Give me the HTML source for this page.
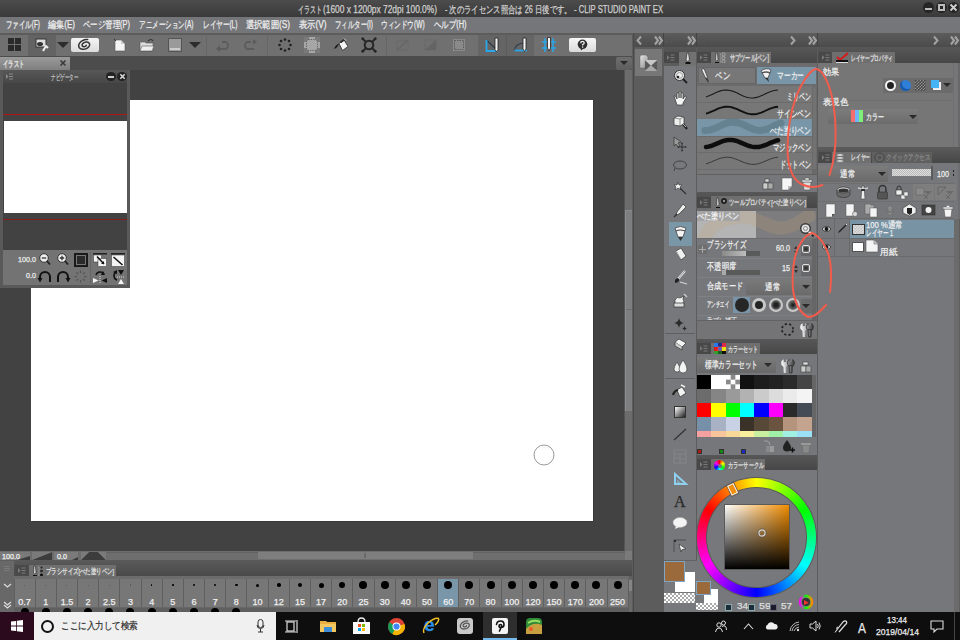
<!DOCTYPE html>
<html><head><meta charset="utf-8">
<style>
*{margin:0;padding:0;box-sizing:border-box}
html,body{width:960px;height:640px;overflow:hidden;background:#424242;font-family:"Liberation Sans",sans-serif;color:#e6e6e6}
.a{position:absolute}
.t{position:absolute;white-space:nowrap;line-height:1;-webkit-text-stroke:.25px currentColor}
svg{position:absolute;overflow:visible}
.mn{position:absolute;-webkit-text-stroke:.25px currentColor;top:20px;font-size:10px;color:#eeeeee;white-space:nowrap;line-height:1}
.sep{position:absolute;top:34px;width:1px;height:21px;background:#666}
.hdr{position:absolute;background:linear-gradient(#575757,#474747)}
.mbox{position:absolute;background:#484848}
.tab{position:absolute;background:#6f6f6f}
.tt{position:absolute;-webkit-text-stroke:.25px currentColor;font-size:8px;color:#e2e2e2;white-space:nowrap;line-height:1}
</style></head><body>
<!-- ================= title bar ================= -->
<div class="a" style="left:0;top:0;width:960px;height:17px;background:linear-gradient(#4c4c4c,#3a3a3a)"></div>
<div class="t f" style="left:298px;top:4.5px;width:24px;font-size:10px;color:#d0d0d0">イラスト</div>
<div class="t f" style="left:323px;top:4.5px;width:114px;font-size:10px;color:#d0d0d0">(1600 x 1200px 72dpi 100.0%)</div>
<div class="t f" style="left:444.5px;top:4.5px;width:126.5px;font-size:10px;color:#d0d0d0">- 次のライセンス照合は 26 日後です。</div>
<div class="t f" style="left:574px;top:4.5px;width:89px;font-size:10px;color:#d0d0d0">- CLIP STUDIO PAINT EX</div>
<div class="a" style="left:923px;top:2px;width:11px;height:11px;border-radius:50%;background:#262626"></div>
<div class="a" style="left:925px;top:8px;width:7px;height:2px;background:#bbb"></div>
<div class="a" style="left:936px;top:2px;width:11px;height:11px;border-radius:50%;background:#262626"></div>
<div class="a" style="left:938px;top:4px;width:7px;height:7px;border:2px solid #bbb"></div>
<div class="a" style="left:948px;top:2px;width:11px;height:11px;border-radius:50%;background:#262626"></div>
<svg style="left:950px;top:4px" width="7" height="7"><path d="M0.5 0.5 L6.5 6.5 M6.5 0.5 L0.5 6.5" stroke="#d0d0d0" stroke-width="1.8"/></svg>
<!-- ================= menu bar ================= -->
<div class="a" style="left:0;top:17px;width:960px;height:16px;background:#75767a"></div>
<div class="mn f" style="left:5.5px;width:34px">ファイル(F)</div>
<div class="mn f" style="left:48.3px;width:27px">編集(E)</div>
<div class="mn f" style="left:83.3px;width:47px">ページ管理(P)</div>
<div class="mn f" style="left:139.3px;width:54.5px">アニメーション(A)</div>
<div class="mn f" style="left:202.5px;width:34.5px">レイヤー(L)</div>
<div class="mn f" style="left:245.5px;width:44px">選択範囲(S)</div>
<div class="mn f" style="left:298.8px;width:27.5px">表示(V)</div>
<div class="mn f" style="left:334.5px;width:38px">フィルター(I)</div>
<div class="mn f" style="left:381.3px;width:43.7px">ウィンドウ(W)</div>
<div class="mn f" style="left:433.8px;width:32.5px">ヘルプ(H)</div>
<!-- ================= toolbar ================= -->
<div class="a" style="left:0;top:33px;width:632px;height:23px;background:#707070;border-top:2px solid #5c5c5c"></div>
<div class="a" style="left:28px;top:35px;width:28px;height:21px;background:#636363"></div>
<div class="a" style="left:478px;top:35px;width:56px;height:21px;background:#656565"></div>
<div class="a" style="left:506px;top:34px;width:1px;height:22px;background:#5c5c5c"></div>
<div class="sep" style="left:206px"></div>
<div class="sep" style="left:267px"></div>
<div class="sep" style="left:386px"></div>
<!-- grid icon -->
<div class="a" style="left:8px;top:38px;width:6px;height:6px;background:#2a2a2a"></div>
<div class="a" style="left:15px;top:38px;width:6px;height:6px;background:#2a2a2a"></div>
<div class="a" style="left:8px;top:45px;width:6px;height:6px;background:#2a2a2a"></div>
<div class="a" style="left:15px;top:45px;width:6px;height:6px;background:#2a2a2a"></div>
<!-- icon2 -->
<svg style="left:35px;top:38px" width="14" height="14"><rect x="1" y="1" width="10" height="8" fill="#ddd" stroke="#333"/><ellipse cx="5" cy="6" rx="3" ry="2" fill="#333"/><path d="M8 13 L11 8 L13 10" stroke="#eee" stroke-width="2" fill="none"/></svg>
<div class="a" style="left:57px;top:42px;width:0;height:0;border-left:6px solid transparent;border-right:6px solid transparent;border-top:6px solid #2c2c2c"></div>
<!-- white spiral button -->
<div class="a" style="left:71px;top:38px;width:28px;height:14px;border-radius:2px;background:linear-gradient(#f4f4f4,#dcdcdc)"></div>
<svg style="left:78px;top:39px" width="14" height="12"><path d="M8.24 6.15 L8.23 6.30 L8.18 6.46 L8.10 6.63 L7.98 6.80 L7.83 6.97 L7.64 7.12 L7.42 7.27 L7.18 7.40 L6.91 7.51 L6.62 7.59 L6.32 7.64 L6.01 7.66 L5.70 7.65 L5.40 7.60 L5.11 7.51 L4.85 7.38 L4.62 7.22 L4.42 7.02 L4.26 6.79 L4.16 6.53 L4.10 6.24 L4.11 5.94 L4.17 5.61 L4.30 5.29 L4.49 4.95 L4.73 4.63 L5.04 4.32 L5.40 4.02 L5.81 3.76 L6.26 3.53 L6.74 3.34 L7.25 3.19 L7.77 3.09 L8.30 3.05 L8.83 3.07 L9.34 3.14 L9.82 3.28 L10.26 3.47 L10.66 3.72 L11.00 4.03 L11.27 4.38 L11.46 4.78 L11.57 5.22 L11.60 5.68 L11.54 6.17 L11.38 6.67 L11.14 7.18 L10.80 7.67 L10.38 8.15 L9.89 8.60 L9.32 9.02 L8.68 9.38 L8.00 9.70 L7.28 9.94 L6.53 10.12 L5.77 10.22 L5.01 10.25 L4.28 10.19 L3.57 10.05 L2.91 9.82 L2.32 9.52 L1.80 9.14 L1.37 8.69 L1.03 8.17 L0.81 7.60 L0.70 6.99 L0.71 6.34 L0.84 5.67 L1.09 4.99 L1.46 4.31 L1.95 3.65 L2.55 3.02 L3.25 2.44 L4.03 1.91 L4.89 1.45 L5.81 1.06 L6.77 0.76 L7.76 0.56 L8.75 0.46 L9.73 0.46" stroke="#333" stroke-width="1.5" fill="none" stroke-linecap="round"/></svg>
<!-- new doc -->
<svg style="left:113px;top:38px" width="14" height="14"><path d="M2 2 H8 L12 6 V13 H2 Z" fill="#f4f4f4" stroke="#555" stroke-width=".6"/><path d="M8 2 V6 H12" fill="#ccc"/><path d="M1 1 L3 3" stroke="#333"/></svg>
<!-- open folder -->
<svg style="left:139px;top:38px" width="16" height="14"><path d="M1 4 H6 L7 5 H14 V13 H1 Z" fill="#ddd" stroke="#555" stroke-width=".6"/><path d="M3 8 H15 L13 13 H1 Z" fill="#eee" stroke="#555" stroke-width=".6"/><path d="M9 3 Q12 0 14 3" stroke="#333" stroke-width="1.2" fill="none"/></svg>
<!-- save -->
<div class="a" style="left:168px;top:38px;width:14px;height:14px;background:#9a9a9a;border:1px solid #555"></div>
<div class="a" style="left:170px;top:48px;width:10px;height:2px;background:#ccc"></div>
<div class="a" style="left:189px;top:42px;width:0;height:0;border-left:6px solid transparent;border-right:6px solid transparent;border-top:6px solid #2c2c2c"></div>
<!-- undo/redo disabled -->
<svg style="left:215px;top:39px" width="16" height="13"><path d="M7 3 H11 A4 4 0 0 1 11 10 H3" stroke="#5c5c5c" stroke-width="1.8" fill="none"/><path d="M1 10 L5 6 V13 Z" fill="#5c5c5c"/></svg>
<svg style="left:242px;top:39px" width="16" height="13"><path d="M9 3 H5 A4 4 0 0 0 5 10 H12" stroke="#5c5c5c" stroke-width="1.8" fill="none"/><path d="M15 3 L11 0 V6 Z" fill="#5c5c5c"/></svg>
<!-- dots circle -->
<svg style="left:278px;top:38px" width="14" height="14"><g fill="#222"><circle cx="7" cy="1.5" r="1.3"/><circle cx="11" cy="3" r="1.3"/><circle cx="12.5" cy="7" r="1.3"/><circle cx="11" cy="11" r="1.3"/><circle cx="7" cy="12.5" r="1.3"/><circle cx="3" cy="11" r="1.3"/><circle cx="1.5" cy="7" r="1.3"/><circle cx="3" cy="3" r="1.3"/></g></svg>
<!-- faint square -->
<div class="a" style="left:304px;top:37px;width:16px;height:16px;background:#7a7a7a"></div>
<svg style="left:304px;top:37px" width="16" height="16"><path d="M5 0 H11 V5 H16 V11 H11 V16 H5 V11 H0 V5 H5 Z" fill="#a6a6a6"/><path d="M4.5 2.5 H11.5 L13.5 4.5 V11.5 L11.5 13.5 H4.5 L2.5 11.5 V4.5 Z" fill="#a6a6a6" stroke="#555" stroke-width=".9" stroke-dasharray="1.2 1.2"/></svg>
<!-- bucket -->
<svg style="left:333px;top:38px" width="16" height="14"><path d="M6 5.5 L11 2 L15 8.5 L9.5 12.5 Z" fill="#f4f4f4" stroke="#2a2a2a" stroke-width=".8"/><path d="M7.5 4.5 L11.5 1.5" stroke="#2a2a2a" stroke-width="1.6"/><path d="M6 5.5 Q2 7 1 11 Q3 11 5 8 Z" fill="#1e1e1e"/><path d="M11 0.5 L13 2.5" stroke="#ddd" stroke-width="1"/></svg>
<!-- transform -->
<svg style="left:361px;top:37px" width="16" height="16"><circle cx="8" cy="8" r="4.3" fill="none" stroke="#262626" stroke-width="2"/><g stroke="#262626" stroke-width="1.8" stroke-linecap="round"><path d="M1.5 1.5 L5 5"/><path d="M14.5 1.5 L11 5"/><path d="M1.5 14.5 L5 11"/><path d="M14.5 14.5 L11 11"/></g><g fill="#262626"><circle cx="1.8" cy="1.8" r="1.4"/><circle cx="14.2" cy="1.8" r="1.4"/><circle cx="1.8" cy="14.2" r="1.4"/><circle cx="14.2" cy="14.2" r="1.4"/></g></svg>
<!-- disabled icons -->
<svg style="left:396px;top:39px" width="13" height="12"><rect x="1" y="2" width="11" height="9" fill="none" stroke="#646464" stroke-dasharray="1.5 1"/><path d="M1 11 L12 1" stroke="#646464" stroke-width="1.2"/></svg>
<svg style="left:424px;top:39px" width="13" height="12"><rect x="1" y="1" width="11" height="10" fill="none" stroke="#646464" stroke-dasharray="1.5 1"/><path d="M12 1 L1 11 H12 Z" fill="#646464"/></svg>
<svg style="left:452px;top:38px" width="14" height="14"><rect x="1" y="1" width="12" height="12" fill="#8a8a8a"/><rect x="2.5" y="2.5" width="9" height="9" fill="none" stroke="#5a5a5a" stroke-dasharray="1.5 1"/></svg>
<!-- ruler pens -->
<svg style="left:485px;top:37px" width="16" height="16"><path d="M1.5 3 L13 14" stroke="#2a3a48" stroke-width="1.2"/><path d="M1.5 3 V14 H13" stroke="#2aa6ea" stroke-width="1.8" fill="none"/><path d="M10 1 H13 V12.5 L11.5 15 L10 12.5 Z" fill="#f2f2f2" stroke="#222" stroke-width=".8"/></svg>
<svg style="left:513px;top:37px" width="16" height="16"><path d="M1.5 13.5 Q2 7 10 6" stroke="#2a3a48" stroke-width="1.2" fill="none"/><path d="M1.5 13.5 H14" stroke="#2aa6ea" stroke-width="1.8"/><path d="M10 1 H13 V12 L11.5 14.5 L10 12 Z" fill="#f2f2f2" stroke="#222" stroke-width=".8"/></svg>
<svg style="left:541px;top:37px" width="16" height="16"><g stroke="#2aa6ea" stroke-width="1.5"><path d="M1 5 H15"/><path d="M1 11 H15"/><path d="M4 1 V15"/><path d="M12 1 V15"/></g><path d="M6.5 0.5 H9.5 V11 L8 14 L6.5 11 Z" fill="#f2f2f2" stroke="#222" stroke-width=".8"/></svg>
<!-- help -->
<div class="a" style="left:569px;top:38px;width:27px;height:14px;border-radius:2px;background:linear-gradient(#f6f6f6,#dadada)"></div>
<svg style="left:576px;top:39px" width="13" height="12"><circle cx="6.5" cy="5.3" r="4.8" fill="#2e2e2e"/><path d="M4.5 8.5 L5 11.5 L7.5 9.5 Z" fill="#2e2e2e"/><path d="M4.8 4.2 Q4.8 2.3 6.5 2.3 Q8.2 2.3 8.2 3.9 Q8.2 5 6.6 5.6 V6.5" stroke="#f0f0f0" stroke-width="1.3" fill="none"/><circle cx="6.6" cy="8" r=".8" fill="#f0f0f0"/></svg>
<!-- ================= tab row ================= -->
<div class="a" style="left:0;top:56px;width:632px;height:14px;background:#4c4c4c"></div>
<div class="a" style="left:0;top:57px;width:70px;height:13px;background:linear-gradient(#9a9a9a,#7f7f7f)"></div>
<div class="t f" style="left:3px;top:60px;width:21px;font-size:9px;color:#f0f0f0">イラスト</div>
<svg style="left:60px;top:60px" width="6" height="6"><path d="M0.5 0.5 L5.5 5.5 M5.5 0.5 L0.5 5.5" stroke="#3a3a3a" stroke-width="1.6"/></svg>
<div class="a" style="left:616px;top:57px;width:16px;height:13px;background:linear-gradient(#6e6e6e,#5e5e5e);border-radius:2px"></div>
<div class="a" style="left:620px;top:61px;width:0;height:0;border-left:4px solid transparent;border-right:4px solid transparent;border-top:4px solid #2a2a2a"></div>
<!-- ================= canvas ================= -->
<div class="a" style="left:0;top:70px;width:624px;height:482px;background:#424242"></div>
<div class="a" style="left:31px;top:100px;width:562px;height:421px;background:#fff;box-shadow:1px 1px 0 #383838"></div>
<svg style="left:533px;top:444px" width="22" height="22"><circle cx="11" cy="11" r="10" fill="none" stroke="#9a9a9a" stroke-width="1"/></svg>
<div class="a" style="left:624px;top:70px;width:9px;height:482px;background:#6c6c6c;border-left:1px solid #555"></div>
<div class="a" style="left:625px;top:210px;width:8px;height:201px;background:#7e7f81;border-left:1px solid #8e8e8e;border-top:1px solid #8a8a8a"></div>
<div class="a" style="left:626px;top:309px;width:6px;height:1px;background:#6e6e6e"></div>
<!-- ================= status bar ================= -->
<div class="a" style="left:0;top:551px;width:632px;height:10px;background:#6c6c6c"></div>
<div class="a" style="left:0;top:552px;width:30px;height:8px;background:#7a7a7a"></div>
<svg style="left:0;top:552px" width="110" height="8"><path d="M17 8 L30 4 V8 Z" fill="#3c3c3c"/><path d="M32 8 L52 0 V8 Z" fill="#3c3c3c"/><path d="M32 0 H52 L32 8 Z" fill="#7a7a7a"/><rect x="54" y="0" width="24" height="8" fill="#7a7a7a"/><path d="M72 8 L78 5 V8 Z" fill="#3c3c3c"/><path d="M81 8 L89 0 H98 L106 8 Z" fill="#3c3c3c"/><path d="M81 0 H89 L81 8 Z M98 0 H106 V8 Z" fill="#7a7a7a"/></svg>
<div class="tt f" style="left:2px;top:553px;width:18px;font-size:8px;color:#f4f4f4">100.0</div>
<div class="tt f" style="left:57px;top:553px;width:10px;font-size:8px;color:#f4f4f4">0.0</div>
<div class="a" style="left:107px;top:552px;width:518px;height:8px;background:#6e6e6e;border-top:1px solid #626262"></div>
<div class="a" style="left:258px;top:552px;width:215px;height:7px;background:#7e7e7e"></div>
<div class="a" style="left:364px;top:553px;width:2px;height:5px;background:#6a6a6a"></div>
<div class="a" style="left:625px;top:551px;width:7px;height:9px;background:#7a7a7a"></div>
<!-- ================= brush size panel ================= -->
<div class="a" style="left:0;top:560px;width:632px;height:52px;background:#5e5e5e"></div>
<div class="a" style="left:0;top:561px;width:14px;height:51px;background:#686868"></div>
<div class="a" style="left:4px;top:566px;width:6px;height:1px;background:#7a7a7a"></div>
<div class="a" style="left:4px;top:568px;width:6px;height:1px;background:#7a7a7a"></div>
<div class="a" style="left:4px;top:570px;width:6px;height:1px;background:#7a7a7a"></div>
<svg style="left:3px;top:583px" width="9" height="5"><path d="M1 1 L4.5 4 L8 1" stroke="#ddd" stroke-width="1.2" fill="none"/></svg>
<svg style="left:3px;top:601px" width="9" height="8"><path d="M1 1 L4.5 4 L8 1 M1 4 L4.5 7 L8 4" stroke="#ddd" stroke-width="1.2" fill="none"/></svg>
<div class="hdr" style="left:14px;top:560px;width:618px;height:16px;background:linear-gradient(#5a5a5a,#4a4a4a)"></div>
<div class="mbox" style="left:15px;top:565px;width:14px;height:11px;background:#4a4a4a"></div>
<svg style="left:18.0px;top:567.0px" width="8" height="7"><path d="M0 1 L2.5 3.5 L0 6 Z" fill="#7a7a7a"/><path d="M3.5 1 H7.5 M3.5 3.5 H7.5 M3.5 6 H7.5" stroke="#7a7a7a" stroke-width="1"/></svg>
<div class="tab" style="left:29px;top:565px;width:87px;height:11px"></div>
<svg style="left:32px;top:565px" width="12" height="12"><path d="M2 1 L3.5 1 L4 8 L2.8 9 L1.6 8 Z" fill="#ddd" stroke="#222" stroke-width=".6"/><rect x="1" y="10" width="4" height="2" fill="#111"/><path d="M6 2 H7 V11 H6" stroke="#aaa" stroke-width=".6" fill="none"/><circle cx="9.5" cy="2.5" r="1" fill="#222"/><circle cx="9.5" cy="6" r="1.3" fill="#222"/><circle cx="9.5" cy="10" r="1.6" fill="#111"/></svg>
<div class="tt f" style="left:46px;top:568px;width:68px;font-size:8px">ブラシサイズ[べた塗りペン]</div>
<div class="a" style="left:14px;top:576px;width:615px;height:3px;background:#6c6c6c"></div>
<div class="a" style="left:14px;top:579px;width:615px;height:33px;background:#5f5f5f"></div>
<div class="a" style="left:14.50px;top:579px;width:20.18px;height:28px;background:#777"></div>
<div class="a" style="left:24.09px;top:584.50px;width:1px;height:1px;border-radius:50%;background:#555"></div>
<div class="tt" style="left:24.59px;top:598px;font-size:9px;color:#f0f0f0;transform:translateX(-50%)">0.7</div>
<div class="a" style="left:20.59px;top:608px;width:8px;height:8px;border-radius:50%;background:#000"></div>
<div class="a" style="left:35.68px;top:579px;width:20.18px;height:28px;background:#777"></div>
<div class="a" style="left:45.27px;top:584.50px;width:1px;height:1px;border-radius:50%;background:#555"></div>
<div class="tt" style="left:45.77px;top:598px;font-size:9px;color:#f0f0f0;transform:translateX(-50%)">1</div>
<div class="a" style="left:41.77px;top:608px;width:8px;height:8px;border-radius:50%;background:#000"></div>
<div class="a" style="left:56.86px;top:579px;width:20.18px;height:28px;background:#777"></div>
<div class="a" style="left:66.45px;top:584.50px;width:1px;height:1px;border-radius:50%;background:#555"></div>
<div class="tt" style="left:66.95px;top:598px;font-size:9px;color:#f0f0f0;transform:translateX(-50%)">1.5</div>
<div class="a" style="left:62.95px;top:608px;width:8px;height:8px;border-radius:50%;background:#000"></div>
<div class="a" style="left:78.04px;top:579px;width:20.18px;height:28px;background:#777"></div>
<div class="a" style="left:87.63px;top:584.50px;width:1px;height:1px;border-radius:50%;background:#555"></div>
<div class="tt" style="left:88.13px;top:598px;font-size:9px;color:#f0f0f0;transform:translateX(-50%)">2</div>
<div class="a" style="left:84.13px;top:608px;width:8px;height:8px;border-radius:50%;background:#000"></div>
<div class="a" style="left:99.22px;top:579px;width:20.18px;height:28px;background:#777"></div>
<div class="a" style="left:108.81px;top:584.50px;width:1px;height:1px;border-radius:50%;background:#555"></div>
<div class="tt" style="left:109.31px;top:598px;font-size:9px;color:#f0f0f0;transform:translateX(-50%)">2.5</div>
<div class="a" style="left:105.31px;top:608px;width:8px;height:8px;border-radius:50%;background:#000"></div>
<div class="a" style="left:120.40px;top:579px;width:20.18px;height:28px;background:#777"></div>
<div class="a" style="left:129.89px;top:584.40px;width:1.2px;height:1.2px;border-radius:50%;background:#555"></div>
<div class="tt" style="left:130.49px;top:598px;font-size:9px;color:#f0f0f0;transform:translateX(-50%)">3</div>
<div class="a" style="left:126.49px;top:608px;width:8px;height:8px;border-radius:50%;background:#000"></div>
<div class="a" style="left:141.58px;top:579px;width:20.18px;height:28px;background:#777"></div>
<div class="a" style="left:150.92px;top:584.25px;width:1.5px;height:1.5px;border-radius:50%;background:#000"></div>
<div class="tt" style="left:151.67px;top:598px;font-size:9px;color:#f0f0f0;transform:translateX(-50%)">4</div>
<div class="a" style="left:147.67px;top:608px;width:8px;height:8px;border-radius:50%;background:#000"></div>
<div class="a" style="left:162.76px;top:579px;width:20.18px;height:28px;background:#777"></div>
<div class="a" style="left:172.05px;top:584.20px;width:1.6px;height:1.6px;border-radius:50%;background:#000"></div>
<div class="tt" style="left:172.85px;top:598px;font-size:9px;color:#f0f0f0;transform:translateX(-50%)">5</div>
<div class="a" style="left:168.85px;top:608px;width:8px;height:8px;border-radius:50%;background:#000"></div>
<div class="a" style="left:183.94px;top:579px;width:20.18px;height:28px;background:#777"></div>
<div class="a" style="left:193.03px;top:584.00px;width:2px;height:2px;border-radius:50%;background:#000"></div>
<div class="tt" style="left:194.03px;top:598px;font-size:9px;color:#f0f0f0;transform:translateX(-50%)">6</div>
<div class="a" style="left:190.03px;top:608px;width:8px;height:8px;border-radius:50%;background:#000"></div>
<div class="a" style="left:205.12px;top:579px;width:20.18px;height:28px;background:#777"></div>
<div class="a" style="left:214.11px;top:583.90px;width:2.2px;height:2.2px;border-radius:50%;background:#000"></div>
<div class="tt" style="left:215.21px;top:598px;font-size:9px;color:#f0f0f0;transform:translateX(-50%)">7</div>
<div class="a" style="left:211.21px;top:608px;width:8px;height:8px;border-radius:50%;background:#000"></div>
<div class="a" style="left:226.30px;top:579px;width:20.18px;height:28px;background:#777"></div>
<div class="a" style="left:235.14px;top:583.75px;width:2.5px;height:2.5px;border-radius:50%;background:#000"></div>
<div class="tt" style="left:236.39px;top:598px;font-size:9px;color:#f0f0f0;transform:translateX(-50%)">8</div>
<div class="a" style="left:232.39px;top:608px;width:8px;height:8px;border-radius:50%;background:#000"></div>
<div class="a" style="left:247.48px;top:579px;width:20.18px;height:28px;background:#777"></div>
<div class="a" style="left:256.07px;top:583.50px;width:3px;height:3px;border-radius:50%;background:#000"></div>
<div class="tt" style="left:257.57px;top:598px;font-size:9px;color:#f0f0f0;transform:translateX(-50%)">10</div>
<div class="a" style="left:268.66px;top:579px;width:20.18px;height:28px;background:#777"></div>
<div class="a" style="left:277.00px;top:583.25px;width:3.5px;height:3.5px;border-radius:50%;background:#000"></div>
<div class="tt" style="left:278.75px;top:598px;font-size:9px;color:#f0f0f0;transform:translateX(-50%)">12</div>
<div class="a" style="left:289.84px;top:579px;width:20.18px;height:28px;background:#777"></div>
<div class="a" style="left:297.68px;top:582.75px;width:4.5px;height:4.5px;border-radius:50%;background:#000"></div>
<div class="tt" style="left:299.93px;top:598px;font-size:9px;color:#f0f0f0;transform:translateX(-50%)">15</div>
<div class="a" style="left:311.02px;top:579px;width:20.18px;height:28px;background:#777"></div>
<div class="a" style="left:318.61px;top:582.50px;width:5px;height:5px;border-radius:50%;background:#000"></div>
<div class="tt" style="left:321.11px;top:598px;font-size:9px;color:#f0f0f0;transform:translateX(-50%)">17</div>
<div class="a" style="left:332.20px;top:579px;width:20.18px;height:28px;background:#777"></div>
<div class="a" style="left:339.29px;top:582.00px;width:6px;height:6px;border-radius:50%;background:#000"></div>
<div class="tt" style="left:342.29px;top:598px;font-size:9px;color:#f0f0f0;transform:translateX(-50%)">20</div>
<div class="a" style="left:353.38px;top:579px;width:20.18px;height:28px;background:#777"></div>
<div class="a" style="left:359.47px;top:581.00px;width:8px;height:8px;border-radius:50%;background:#000"></div>
<div class="tt" style="left:363.47px;top:598px;font-size:9px;color:#f0f0f0;transform:translateX(-50%)">25</div>
<div class="a" style="left:374.56px;top:579px;width:20.18px;height:28px;background:#777"></div>
<div class="a" style="left:380.65px;top:581.00px;width:8px;height:8px;border-radius:50%;background:#000"></div>
<div class="tt" style="left:384.65px;top:598px;font-size:9px;color:#f0f0f0;transform:translateX(-50%)">30</div>
<div class="a" style="left:395.74px;top:579px;width:20.18px;height:28px;background:#777"></div>
<div class="a" style="left:401.83px;top:581.00px;width:8px;height:8px;border-radius:50%;background:#000"></div>
<div class="tt" style="left:405.83px;top:598px;font-size:9px;color:#f0f0f0;transform:translateX(-50%)">40</div>
<div class="a" style="left:416.92px;top:579px;width:20.18px;height:28px;background:#777"></div>
<div class="a" style="left:423.01px;top:581.00px;width:8px;height:8px;border-radius:50%;background:#000"></div>
<div class="tt" style="left:427.01px;top:598px;font-size:9px;color:#f0f0f0;transform:translateX(-50%)">50</div>
<div class="a" style="left:438.10px;top:579px;width:20.18px;height:28px;background:#7a97a9"></div>
<div class="a" style="left:444.19px;top:581.00px;width:8px;height:8px;border-radius:50%;background:#000"></div>
<div class="tt" style="left:448.19px;top:598px;font-size:9px;color:#f0f0f0;transform:translateX(-50%)">60</div>
<div class="a" style="left:459.28px;top:579px;width:20.18px;height:28px;background:#777"></div>
<div class="a" style="left:465.37px;top:581.00px;width:8px;height:8px;border-radius:50%;background:#000"></div>
<div class="tt" style="left:469.37px;top:598px;font-size:9px;color:#f0f0f0;transform:translateX(-50%)">70</div>
<div class="a" style="left:480.46px;top:579px;width:20.18px;height:28px;background:#777"></div>
<div class="a" style="left:486.55px;top:581.00px;width:8px;height:8px;border-radius:50%;background:#000"></div>
<div class="tt" style="left:490.55px;top:598px;font-size:9px;color:#f0f0f0;transform:translateX(-50%)">80</div>
<div class="a" style="left:501.64px;top:579px;width:20.18px;height:28px;background:#777"></div>
<div class="a" style="left:507.73px;top:581.00px;width:8px;height:8px;border-radius:50%;background:#000"></div>
<div class="tt" style="left:511.73px;top:598px;font-size:9px;color:#f0f0f0;transform:translateX(-50%)">100</div>
<div class="a" style="left:522.82px;top:579px;width:20.18px;height:28px;background:#777"></div>
<div class="a" style="left:528.91px;top:581.00px;width:8px;height:8px;border-radius:50%;background:#000"></div>
<div class="tt" style="left:532.91px;top:598px;font-size:9px;color:#f0f0f0;transform:translateX(-50%)">120</div>
<div class="a" style="left:544.00px;top:579px;width:20.18px;height:28px;background:#777"></div>
<div class="a" style="left:550.09px;top:581.00px;width:8px;height:8px;border-radius:50%;background:#000"></div>
<div class="tt" style="left:554.09px;top:598px;font-size:9px;color:#f0f0f0;transform:translateX(-50%)">150</div>
<div class="a" style="left:565.18px;top:579px;width:20.18px;height:28px;background:#777"></div>
<div class="a" style="left:571.27px;top:581.00px;width:8px;height:8px;border-radius:50%;background:#000"></div>
<div class="tt" style="left:575.27px;top:598px;font-size:9px;color:#f0f0f0;transform:translateX(-50%)">170</div>
<div class="a" style="left:586.36px;top:579px;width:20.18px;height:28px;background:#777"></div>
<div class="a" style="left:592.45px;top:581.00px;width:8px;height:8px;border-radius:50%;background:#000"></div>
<div class="tt" style="left:596.45px;top:598px;font-size:9px;color:#f0f0f0;transform:translateX(-50%)">200</div>
<div class="a" style="left:607.54px;top:579px;width:20.18px;height:28px;background:#777"></div>
<div class="a" style="left:613.63px;top:581.00px;width:8px;height:8px;border-radius:50%;background:#000"></div>
<div class="tt" style="left:617.63px;top:598px;font-size:9px;color:#f0f0f0;transform:translateX(-50%)">250</div>
<div class="a" style="left:14px;top:607px;width:615px;height:1px;background:#666"></div>
<div class="a" style="left:629px;top:579px;width:3px;height:33px;background:#6a6a6a"></div>
<div class="a" style="left:629px;top:580px;width:3px;height:11px;background:#858585"></div>
<!-- ================= navigator ================= -->
<div class="a" style="left:0;top:70px;width:130px;height:218px;background:#595959"></div>
<div class="hdr" style="left:3px;top:70px;width:124px;height:13px"></div>
<svg style="left:6px;top:73px" width="7" height="7"><path d="M0 1 L2.5 3.5 L0 6 Z" fill="#8a8a8a"/><path d="M3 1 H7 M3 3.5 H7 M3 6 H7" stroke="#8a8a8a" stroke-width="1"/></svg>
<div class="tt f" style="left:51px;top:74px;width:27px;font-size:8px;color:#bdbdbd">ナビゲーター</div>
<div class="a" style="left:106px;top:72px;width:10px;height:9px;border-radius:50%;background:#222"></div>
<div class="a" style="left:108px;top:76px;width:6px;height:2px;background:#ccc"></div>
<div class="a" style="left:117px;top:72px;width:10px;height:9px;border-radius:50%;background:#222"></div>
<svg style="left:119.5px;top:74px" width="5" height="5"><path d="M0.3 0.3 L4.7 4.7 M4.7 0.3 L0.3 4.7" stroke="#ddd" stroke-width="1.5"/></svg>
<div class="a" style="left:3px;top:83px;width:124px;height:167px;background:#424242"></div>
<div class="a" style="left:3px;top:114px;width:124px;height:1px;background:#b01818"></div>
<div class="a" style="left:4px;top:121px;width:123px;height:92px;background:#fff"></div>
<div class="a" style="left:3px;top:219px;width:124px;height:1px;background:#8a1c1c"></div>
<div class="a" style="left:3px;top:250px;width:124px;height:35px;background:#737373"></div>

<!-- nav controls -->
<div class="tt f" style="left:18px;top:256px;width:18px;font-size:8px;color:#eee">100.0</div>
<div class="tt f" style="left:26px;top:272px;width:10px;font-size:8px;color:#eee">0.0</div>
<svg style="left:39px;top:253px" width="12" height="13"><circle cx="5" cy="5" r="4.3" fill="#eee" stroke="#333" stroke-width="1"/><path d="M2.8 5 H7.2" stroke="#333" stroke-width="1.3"/><path d="M8 8 L11 11.5" stroke="#222" stroke-width="1.8"/></svg>
<svg style="left:57px;top:253px" width="12" height="13"><circle cx="5" cy="5" r="4.3" fill="#eee" stroke="#333" stroke-width="1"/><path d="M2.8 5 H7.2 M5 2.8 V7.2" stroke="#333" stroke-width="1.3"/><path d="M8 8 L11 11.5" stroke="#222" stroke-width="1.8"/></svg>
<div class="a" style="left:74px;top:253px;width:14px;height:14px;background:#2a2a2a;border:2px solid #1a1a1a;box-shadow:inset 0 0 0 1px #777"></div>
<svg style="left:93px;top:253px" width="14" height="14"><rect x="0" y="0" width="14" height="1.5" fill="#222"/><rect x="0.5" y="2" width="8" height="7" fill="#f4f4f4" stroke="#333" stroke-width=".5"/><rect x="5" y="5.5" width="8.5" height="8" fill="#f4f4f4" stroke="#333" stroke-width=".5"/><path d="M4 3.5 L11 11" stroke="#111" stroke-width="1.5"/><path d="M11 11 L8 11 L11 8 Z" fill="#111"/></svg>
<svg style="left:111px;top:253px" width="14" height="14"><rect x="0" y="0" width="14" height="1.5" fill="#222"/><rect x="0.5" y="2" width="13" height="11.5" fill="#f4f4f4" stroke="#333" stroke-width=".5"/><path d="M2.5 4 L11.5 12" stroke="#111" stroke-width="1.5"/></svg>
<svg style="left:38px;top:270px" width="14" height="13"><path d="M12 12 V7 A5 5 0 0 0 2 7 V9" stroke="#111" stroke-width="2" fill="none"/><path d="M-0.5 8 L2 12.5 L4.5 8 Z" fill="#111"/></svg>
<svg style="left:56px;top:270px" width="14" height="13"><path d="M2 12 V7 A5 5 0 0 1 12 7 V9" stroke="#111" stroke-width="2" fill="none"/><path d="M9.5 8 L12 12.5 L14.5 8 Z" fill="#111"/></svg>
<svg style="left:74px;top:270px" width="13" height="13"><g stroke="#555" stroke-width="1.2"><path d="M6.5 0.5 V3"/><path d="M6.5 10 V12.5"/><path d="M0.5 6.5 H3"/><path d="M10 6.5 H12.5"/><path d="M2.3 2.3 L4 4"/><path d="M9 9 L10.7 10.7"/><path d="M2.3 10.7 L4 9"/><path d="M9 4 L10.7 2.3"/></g></svg>
<svg style="left:93px;top:269px" width="14" height="15"><path d="M3 6 A4.5 4.5 0 0 1 11 5" stroke="#111" stroke-width="1.5" fill="none"/><path d="M10 2 L12 6 L8 6 Z" fill="#111"/><path d="M7 7 V15" stroke="#ddd" stroke-dasharray="1 1"/><path d="M0 9 L5.5 11.5 L0 14 Z" fill="#f4f4f4"/><path d="M14 9 L8.5 11.5 L14 14 Z" fill="#111"/></svg>
<svg style="left:111px;top:269px" width="14" height="15"><path d="M6 11 A4.5 4.5 0 0 1 5 3" stroke="#111" stroke-width="1.5" fill="none"/><path d="M2 3 L6 1 L6 5 Z" fill="#111"/><path d="M6 8 H14" stroke="#ddd" stroke-dasharray="1 1"/><path d="M7 1 H13 L10 6 Z" fill="#111"/><path d="M7 15 H13 L10 10 Z" fill="#f4f4f4"/></svg>
<div class="a" style="left:90px;top:252px;width:1px;height:32px;background:#666"></div>
<!-- ================= right panels ================= -->
<div class="a" style="left:632px;top:33px;width:328px;height:579px;background:#5c5c5c"></div>

<div class="a" style="left:633px;top:33px;width:1px;height:579px;background:#4a4a4a"></div>
<!-- top bar -->
<div class="a" style="left:634px;top:33px;width:326px;height:14px;background:linear-gradient(#5c5c5c,#4b4b4b)"></div>
<div class="a" style="left:663px;top:33px;width:1px;height:14px;background:#444"></div>
<div class="a" style="left:696px;top:33px;width:1px;height:14px;background:#444"></div>
<div class="a" style="left:817px;top:33px;width:1px;height:14px;background:#444"></div>
<svg style="left:636px;top:36px" width="6" height="9"><path d="M5 0.5 L1.5 4.5 L5 8.5" stroke="#a2a2a2" stroke-width="2" fill="none"/></svg>
<svg style="left:654px;top:36px" width="9" height="9"><path d="M1 0.5 L4 4.5 L1 8.5 M5 0.5 L8 4.5 L5 8.5" stroke="#a2a2a2" stroke-width="2.1" fill="none"/></svg>
<svg style="left:687px;top:36px" width="9" height="9"><path d="M1 0.5 L4 4.5 L1 8.5 M5 0.5 L8 4.5 L5 8.5" stroke="#a2a2a2" stroke-width="2.1" fill="none"/></svg>
<svg style="left:790px;top:36px" width="6" height="9"><path d="M1 0.5 L4.5 4.5 L1 8.5" stroke="#a2a2a2" stroke-width="2" fill="none"/></svg>
<svg style="left:808px;top:36px" width="9" height="9"><path d="M1 0.5 L4 4.5 L1 8.5 M5 0.5 L8 4.5 L5 8.5" stroke="#a2a2a2" stroke-width="2.1" fill="none"/></svg>
<svg style="left:933px;top:36px" width="6" height="9"><path d="M1 0.5 L4.5 4.5 L1 8.5" stroke="#a2a2a2" stroke-width="2" fill="none"/></svg>
<svg style="left:950px;top:36px" width="9" height="9"><path d="M1 0.5 L4 4.5 L1 8.5 M5 0.5 L8 4.5 L5 8.5" stroke="#a2a2a2" stroke-width="2.1" fill="none"/></svg>
<div class="a" style="left:666px;top:37px;width:6px;height:6px;border-left:1px solid #555;border-right:1px solid #555"></div>
<div class="a" style="left:699px;top:37px;width:6px;height:6px;border-left:1px solid #555;border-right:1px solid #555"></div>
<div class="a" style="left:820px;top:37px;width:6px;height:6px;border-left:1px solid #555;border-right:1px solid #555"></div>
<!-- column 1 icon box -->
<div class="a" style="left:635px;top:49px;width:27px;height:27px;background:#777"></div>
<svg style="left:639px;top:53px" width="20" height="20"><defs><linearGradient id="fg" x1="0" y1="0" x2="1" y2="1"><stop offset="0" stop-color="#e8e8e8"/><stop offset="1" stop-color="#8a8a8a"/></linearGradient></defs><path d="M1 4 Q1 2 3 2 H7 L9 4 V15 H1 Z" fill="url(#fg)" stroke="#666" stroke-width=".5"/><rect x="6" y="7" width="12" height="11" fill="#d8d8d8"/><path d="M6 7 L12 12.5 L6 18 Z M18 7 L12 12.5 L18 18 Z" fill="#5a5a5a"/><path d="M6 7 L12 12.5 L18 7 Z" fill="#c8c8c8"/><path d="M6 18 L12 12.5 L18 18 Z" fill="#a8a8a8"/></svg>
<!-- tool column -->
<div class="hdr" style="left:664px;top:47px;width:32px;height:16px"></div>
<div class="mbox" style="left:664px;top:52px;width:15px;height:11px"></div>
<svg style="left:667.0px;top:54.0px" width="8" height="7"><path d="M0 1 L2.5 3.5 L0 6 Z" fill="#7a7a7a"/><path d="M3.5 1 H7.5 M3.5 3.5 H7.5 M3.5 6 H7.5" stroke="#7a7a7a" stroke-width="1"/></svg>
<div class="tab" style="left:679px;top:52px;width:17px;height:14px;background:#727272"></div>
<svg style="left:685px;top:52px" width="6" height="12"><path d="M2 1 L3.5 1 L4.5 8 L2.8 9.5 L1 8 Z" fill="#ddd" stroke="#222" stroke-width=".6"/><rect x="0.5" y="10" width="5" height="2" fill="#111"/></svg>
<div class="a" style="left:664px;top:66px;width:32px;height:494px;background:#77787b"></div>
<!-- subtool panel -->
<div class="hdr" style="left:697px;top:47px;width:120px;height:16px"></div>
<div class="mbox" style="left:697px;top:52px;width:14px;height:11px"></div>
<svg style="left:700.0px;top:54.0px" width="8" height="7"><path d="M0 1 L2.5 3.5 L0 6 Z" fill="#7a7a7a"/><path d="M3.5 1 H7.5 M3.5 3.5 H7.5 M3.5 6 H7.5" stroke="#7a7a7a" stroke-width="1"/></svg>
<div class="tab" style="left:711px;top:52px;width:60px;height:11px"></div>
<svg style="left:714px;top:52px" width="14" height="12"><path d="M2 1 L3.5 1 L4 8 L2.8 9 L1.6 8 Z" fill="#ddd" stroke="#222" stroke-width=".6"/><rect x="1" y="10" width="4" height="2" fill="#111"/><path d="M6.5 1 V11" stroke="#999" stroke-width=".6"/><circle cx="9.5" cy="2.5" r="1.6" fill="none" stroke="#bbb" stroke-width=".7"/><circle cx="9.5" cy="6" r="1.6" fill="none" stroke="#bbb" stroke-width=".7"/><circle cx="9.5" cy="9.5" r="1.6" fill="none" stroke="#bbb" stroke-width=".7"/></svg>
<div class="tt f" style="left:729.5px;top:54px;width:39px;font-size:9px">サブツール[ペン]</div>
<div class="a" style="left:697px;top:63px;width:120px;height:129px;background:#6c6c6e"></div>
<div class="a" style="left:697.5px;top:67px;width:58px;height:17px;background:#777;border:1px solid #666"></div>
<svg style="left:700px;top:68px" width="10" height="15"><path d="M1.5 1.5 L4 0.5 L7 8 L7.5 12 L5 9 Z" fill="#eee" stroke="#333" stroke-width=".7"/><path d="M6 10 L8.5 14" stroke="#333" stroke-width="1.2"/></svg>
<div class="tt f" style="left:715px;top:71px;width:15px;font-size:10px;color:#eee">ペン</div>
<div class="a" style="left:757px;top:67px;width:59px;height:17px;background:#7896a8"></div>
<svg style="left:760px;top:68px" width="13" height="15"><path d="M1 3 Q6 -1 11 2 L8 10 L5 10 Z" fill="#f2f2f2" stroke="#333" stroke-width=".7"/><path d="M2 5 Q6 3 10 5" stroke="#555" stroke-width="1.5" fill="none"/><path d="M5 10 L8 10 L9 14 Z" fill="#333"/></svg>
<div class="tt f" style="left:777px;top:71px;width:27px;font-size:10px;color:#eee">マーカー</div>

<!-- brush list -->
<div class="a" style="left:697px;top:86px;width:115px;height:16px;background:#777"></div>
<div class="a" style="left:697px;top:103px;width:115px;height:16px;background:#777"></div>
<div class="a" style="left:697px;top:119px;width:115px;height:17px;background:#7896a8"></div>
<div class="a" style="left:697px;top:137px;width:115px;height:15px;background:#777"></div>
<div class="a" style="left:697px;top:153px;width:115px;height:16px;background:#777"></div>
<div class="a" style="left:697px;top:170px;width:115px;height:4px;background:#777"></div>
<div class="a" style="left:812px;top:86px;width:5px;height:88px;background:#6a6a6a"></div><div class="a" style="left:813px;top:87px;width:3px;height:82px;background:#727272"></div>
<svg style="left:697px;top:86px" width="115" height="88">
<path transform="translate(0,0)" d="M9.0 11.0 L11.4 10.1 L13.8 9.1 L16.2 7.9 L18.6 6.8 L21.0 5.7 L23.4 4.9 L25.8 4.3 L28.2 4.0 L30.6 4.1 L33.0 4.5 L35.4 5.1 L37.8 6.1 L40.2 7.1 L42.6 8.3 L45.0 9.4 L47.4 10.4 L49.8 11.2 L52.2 11.8 L54.6 12.0 L57.0 11.9 L59.4 11.4 L61.8 10.7 L64.2 9.8 L66.6 8.7 L69.0 7.5 L71.4 6.4 L73.8 5.4 L76.2 4.7 L78.6 4.2 L81.0 4.0" stroke="#1a1a1a" stroke-width="1.1" fill="none"/>
<path transform="translate(0,17)" d="M9.0 10.6 L11.4 9.9 L13.8 8.9 L16.2 7.9 L18.6 6.8 L21.0 5.7 L23.4 4.8 L25.8 4.2 L28.2 3.8 L30.6 3.7 L33.0 3.9 L35.4 4.5 L37.8 5.3 L40.2 6.2 L42.6 7.3 L45.0 8.4 L47.4 9.4 L49.8 10.3 L52.2 10.9 L54.6 11.2 L57.0 11.3 L59.4 11.0 L61.8 10.4 L64.2 9.6 L66.6 8.6 L69.0 7.5 L71.4 6.4 L73.8 5.4 L76.2 4.6 L78.6 4.0 L81.0 3.7" stroke="#111" stroke-width="1.9" fill="none"/>
<path transform="translate(0,33)" d="M8.0 11.4 L10.5 11.3 L13.1 10.9 L15.6 10.2 L18.1 9.2 L20.7 8.1 L23.2 6.9 L25.7 5.7 L28.3 4.6 L30.8 3.7 L33.3 3.2 L35.9 3.0 L38.4 3.2 L40.9 3.7 L43.5 4.5 L46.0 5.5 L48.5 6.7 L51.1 8.0 L53.6 9.1 L56.1 10.1 L58.7 10.9 L61.2 11.3 L63.7 11.4 L66.3 11.1 L68.8 10.5 L71.3 9.6 L73.9 8.5 L76.4 7.2 L78.9 6.0 L81.5 4.9 L84.0 4.0" stroke="#5f7b89" stroke-width="7" fill="none" opacity=".75" stroke-linecap="round"/>
<path transform="translate(0,50)" d="M9.0 11.0 L11.4 10.6 L13.8 10.0 L16.2 9.1 L18.6 8.1 L21.0 7.1 L23.4 6.1 L25.8 5.2 L28.2 4.5 L30.6 4.1 L33.0 3.9 L35.4 4.1 L37.8 4.5 L40.2 5.2 L42.6 6.1 L45.0 7.1 L47.4 8.1 L49.8 9.1 L52.2 10.0 L54.6 10.6 L57.0 11.0 L59.4 11.1 L61.8 10.9 L64.2 10.4 L66.6 9.7 L69.0 8.8 L71.4 7.8 L73.8 6.7 L76.2 5.8 L78.6 4.9 L81.0 4.3" stroke="#0d0d0d" stroke-width="4.5" fill="none" stroke-linecap="round"/>
<path transform="translate(0,67)" d="M9.0 10.8 L11.4 10.1 L13.8 9.2 L16.2 8.1 L18.6 7.1 L21.0 6.1 L23.4 5.3 L25.8 4.7 L28.2 4.3 L30.6 4.2 L33.0 4.4 L35.4 4.9 L37.8 5.7 L40.2 6.6 L42.6 7.6 L45.0 8.7 L47.4 9.6 L49.8 10.4 L52.2 11.0 L54.6 11.3 L57.0 11.4 L59.4 11.1 L61.8 10.6 L64.2 9.8 L66.6 8.8 L69.0 7.8 L71.4 6.8 L73.8 5.8 L76.2 5.0 L78.6 4.5 L81.0 4.2" stroke="#2a2a2a" stroke-width=".8" fill="none"/>
</svg>
<div class="tt f" style="left:787px;top:92px;width:24px;font-size:10px;color:#eee">ミリペン</div>
<div class="tt f" style="left:777px;top:109px;width:34px;font-size:10px;color:#eee">サインペン</div>
<div class="tt f" style="left:770px;top:126px;width:41px;font-size:10px;color:#eee">べた塗りペン</div>
<div class="tt f" style="left:773px;top:143px;width:38px;font-size:10px;color:#eee">マジックペン</div>
<div class="tt f" style="left:780px;top:160px;width:31px;font-size:10px;color:#eee">ドットペン</div>
<!-- subtool bottom bar -->
<div class="a" style="left:697px;top:174px;width:120px;height:18px;background:#76777a;border-top:1px solid #606060"></div>
<svg style="left:762px;top:178px" width="12" height="12"><rect x="1" y="5" width="5" height="6" fill="#ccc" stroke="#444" stroke-width=".6"/><rect x="6" y="5" width="5" height="6" fill="#aaa" stroke="#444" stroke-width=".6"/><rect x="3" y="1" width="4" height="3" fill="#ddd" stroke="#444" stroke-width=".6"/></svg>
<svg style="left:781px;top:177px" width="12" height="14"><path d="M1 1 H11 V9 L7 13 H1 Z" fill="#f5f5f5" stroke="#555" stroke-width=".5"/><path d="M11 9 L7 9 V13" fill="#bbb"/></svg>
<svg style="left:801px;top:177px" width="12" height="14"><path d="M2 5 H10 L9 13 H3 Z" fill="#ddd" stroke="#555" stroke-width=".6"/><rect x="1" y="3" width="10" height="2" fill="#eee" stroke="#555" stroke-width=".5"/><rect x="4" y="1" width="4" height="2" fill="#eee" stroke="#555" stroke-width=".5"/></svg>
<!-- ================= tool column icons ================= -->
<svg style="left:673px;top:69px" width="16" height="16"><circle cx="6.5" cy="6.5" r="5" fill="#eee" stroke="#333" stroke-width="1"/><circle cx="6.5" cy="6.5" r="3" fill="none" stroke="#999" stroke-width="1"/><circle cx="5" cy="8" r="1.3" fill="#222"/><path d="M10 10 L14 14" stroke="#222" stroke-width="2"/></svg>
<svg style="left:673px;top:91px" width="15" height="15"><path d="M4 14 L2 8 L1 5 Q2 4 3 6 L4 8 V2 Q5 1 6 2 V7 V1 Q7 0 8 1 V7 V2 Q9 1 10 2 V8 L12 5 Q14 5 13 7 L10 12 V14 Z" fill="#f4f4f4" stroke="#333" stroke-width=".7"/></svg>
<svg style="left:672px;top:114px" width="17" height="17"><path d="M2 4 L6 2 L12 3 V10 L8 12 L2 11 Z" fill="#eee" stroke="#333" stroke-width=".7"/><path d="M2 4 L8 5 L12 3 M8 5 V12" stroke="#555" stroke-width=".6" fill="none"/><path d="M11 10 L15 15" stroke="#222" stroke-width="2.2"/><path d="M11 10 L14 13" stroke="#ddd" stroke-width=".8"/></svg>
<svg style="left:672px;top:136px" width="16" height="16"><path d="M2 1 L9 6 L6 7 L8 10 L6 11 L4 8 L2 10 Z" fill="#999" stroke="#333" stroke-width=".7"/><path d="M10 7 V15 M6 11 H14" stroke="#333" stroke-width="1"/><path d="M10 6 L9 8 H11 Z M10 16 L9 14 H11 Z M5 11 L7 10 V12 Z M15 11 L13 10 V12 Z" fill="#333"/></svg>
<svg style="left:672px;top:159px" width="16" height="14"><ellipse cx="8" cy="6" rx="6.5" ry="4" fill="none" stroke="#444" stroke-width="1"/><path d="M3 9 L2 12" stroke="#444"/></svg>
<svg style="left:673px;top:180px" width="15" height="15"><path d="M5 2 L6 5 L9 5 L7 7 L8 10 L5 8 L2 10 L3 7 L1 5 L4 5 Z" fill="#f4f4f4" stroke="#333" stroke-width=".6"/><path d="M7 8 L13 14" stroke="#333" stroke-width="1.3"/></svg>
<svg style="left:673px;top:203px" width="15" height="15"><path d="M10 1 L13 4 L6 11 L3 12 L4 9 Z" fill="#eee" stroke="#333" stroke-width=".7"/><path d="M4 11 L1 14" stroke="#333" stroke-width="1.2"/></svg>
<div class="a" style="left:669px;top:222px;width:23px;height:24px;background:#7a97a8"></div>
<svg style="left:673px;top:225px" width="15" height="18"><path d="M2 3 Q7 0 13 3 L10 12 H5 Z" fill="#f4f4f4" stroke="#333" stroke-width=".7"/><path d="M3 6 Q7 4 12 6" stroke="#444" stroke-width="1.2" fill="none"/><path d="M5 12 L7.5 16 L10 12" fill="#333"/></svg>
<svg style="left:673px;top:247px" width="15" height="15"><path d="M3 4 L8 1 L13 9 L8 13 Z" fill="#f0f0f0" stroke="#444" stroke-width=".8"/><path d="M3 4 L8 12" stroke="#bbb" stroke-width="1"/></svg>
<svg style="left:672px;top:270px" width="16" height="15"><path d="M13 1 L6 9" stroke="#f0f0f0" stroke-width="2"/><path d="M13 1 L6 9" stroke="#333" stroke-width=".5"/><path d="M3 10 Q5 7 7 9 Q8 12 3 13 Z" fill="#222"/><path d="M8 12 L15 14" stroke="#ddd" stroke-width="1"/></svg>
<svg style="left:672px;top:293px" width="16" height="15"><path d="M3 7 Q5 3 8 5 L12 3 L11 6 Q13 8 10 12 H3 Z" fill="#f0f0f0" stroke="#333" stroke-width=".7"/><rect x="2" y="10" width="10" height="4" fill="#ddd" stroke="#333" stroke-width=".7"/><path d="M12 1 L15 4" stroke="#ccc" stroke-width="1.4"/></svg>
<svg style="left:674px;top:318px" width="14" height="14"><path d="M5 0 Q5.6 4.4 10 5 Q5.6 5.6 5 10 Q4.4 5.6 0 5 Q4.4 4.4 5 0 Z" fill="#2a2a2a"/><path d="M10.5 8 Q10.8 10.2 13 10.5 Q10.8 10.8 10.5 13 Q10.2 10.8 8 10.5 Q10.2 10.2 10.5 8 Z" fill="#2a2a2a"/></svg>
<div class="a" style="left:665px;top:333px;width:30px;height:1px;background:#5e5e5e"></div>
<svg style="left:672px;top:337px" width="16" height="15"><path d="M3 5 L7 2 L14 6 L10 10 Z" fill="#f4f4f4" stroke="#333" stroke-width=".7"/><path d="M3 5 V9 L10 13 V10" fill="#ccc" stroke="#333" stroke-width=".7"/></svg>
<svg style="left:672px;top:359px" width="16" height="15"><path d="M5 3 Q2 8 2 10 A3 3 0 0 0 8 10 Q8 8 5 3 Z" fill="#f0f0f0" stroke="#333" stroke-width=".6"/><path d="M11 1 Q7 7 7 10 A4 4 0 0 0 15 10 Q15 7 11 1 Z" fill="#f4f4f4" stroke="#333" stroke-width=".6"/></svg>
<div class="a" style="left:665px;top:378px;width:30px;height:1px;background:#5e5e5e"></div>
<svg style="left:672px;top:384px" width="16" height="15"><path d="M5 6 L10 3 L14 9 L8 13 Z" fill="#f4f4f4" stroke="#333" stroke-width=".7"/><path d="M1 11 Q2 7 6 6" stroke="#222" stroke-width="2.2" fill="none"/><path d="M9 1 L13 3" stroke="#eee" stroke-width="1.5"/></svg>
<div class="a" style="left:674px;top:406px;width:12px;height:12px;background:linear-gradient(135deg,#fff,#222);border:1px solid #333"></div>
<svg style="left:672px;top:427px" width="16" height="15"><path d="M2 13 L14 2" stroke="#333" stroke-width="1.2"/></svg>
<svg style="left:673px;top:449px" width="14" height="15"><rect x="1" y="1" width="12" height="13" fill="none" stroke="#888" stroke-width=".8"/><path d="M1 5 H13 M7 5 V14 M1 9 H7 M7 10 H13" stroke="#888" stroke-width=".8"/></svg>
<svg style="left:673px;top:472px" width="15" height="14"><path d="M2 2 L13 12 H2 Z" fill="none" stroke="#8fd0f0" stroke-width="2"/><path d="M4 7 L8 11 H4 Z" fill="#8fd0f0" opacity=".5"/></svg>
<div class="t" style="left:674px;top:494px;font-family:'Liberation Serif',serif;font-size:16px;color:#2a2a2a">A</div>
<svg style="left:672px;top:516px" width="16" height="14"><ellipse cx="8" cy="6.5" rx="7" ry="5" fill="#f4f4f4" stroke="#aaa" stroke-width=".6"/><path d="M4 10 L3 13 L7 11 Z" fill="#f4f4f4"/></svg>
<svg style="left:672px;top:538px" width="16" height="15"><path d="M2 2 L14 2" stroke="#444" stroke-width=".8"/><path d="M2 2 V14" stroke="#444" stroke-width=".8"/><circle cx="3" cy="3" r="1.2" fill="#333"/><path d="M7 6 L14 11 L10 11.5 L9 14 Z" fill="#f4f4f4" stroke="#333" stroke-width=".7"/></svg>
<!-- ================= tool property ================= -->
<div class="hdr" style="left:697px;top:192px;width:120px;height:16px"></div>
<div class="mbox" style="left:697px;top:197px;width:14px;height:11px"></div>
<svg style="left:700.0px;top:199.0px" width="8" height="7"><path d="M0 1 L2.5 3.5 L0 6 Z" fill="#7a7a7a"/><path d="M3.5 1 H7.5 M3.5 3.5 H7.5 M3.5 6 H7.5" stroke="#7a7a7a" stroke-width="1"/></svg>
<div class="tab" style="left:711px;top:196px;width:96px;height:12px"></div>
<svg style="left:715px;top:197px" width="14" height="13"><path d="M2 1 L3.5 1 L4 8 L2.8 9 L1.6 8 Z" fill="#ddd" stroke="#222" stroke-width=".6"/><rect x="1" y="10" width="4" height="2" fill="#111"/><circle cx="9" cy="4" r="3" fill="#222"/><circle cx="9" cy="4" r="1" fill="#bbb"/></svg>
<div class="tt f" style="left:729px;top:199px;width:77px;font-size:8px">ツールプロパティ[べた塗りペン]</div>
<div class="a" style="left:697px;top:208px;width:120px;height:112px;background:#6c6c6e"></div>
<!-- preview -->
<div class="a" style="left:697px;top:211px;width:119px;height:27px;background:#7d7d7f"></div>
<div class="a" style="left:697px;top:211px;width:59px;height:27px;background:#b4b4b4"></div>
<svg style="left:697px;top:211px" width="119" height="27"><clipPath id="pc"><rect x="0" y="0" width="119" height="27"/></clipPath><path clip-path="url(#pc)" d="M7 28 C14 12,28 6,45 6 C62 6,70 17,84 17 C97 17,105 8,112 5" stroke="#ca9e71" stroke-width="13" fill="none" opacity=".22" stroke-linecap="round"/></svg>
<div class="a" style="left:697px;top:211px;width:43px;height:10px;background:#a4a4a4"></div>
<div class="tt f" style="left:697px;top:212px;width:42px;font-size:9px;color:#f4f4f4">べた塗りペン</div>
<svg style="left:799px;top:222px" width="16" height="16"><circle cx="6.5" cy="6.5" r="5.5" fill="#3a3a3a"/><circle cx="6.5" cy="6.5" r="4" fill="#e4e4e4"/><circle cx="6.5" cy="6.5" r="2" fill="none" stroke="#888" stroke-width="1"/><path d="M10 10 L14 14" stroke="#f0f0f0" stroke-width="2.4"/><path d="M12.5 12.5 L14.5 14.5" stroke="#222" stroke-width="2"/></svg>
<!-- rows -->
<div class="a" style="left:697px;top:239px;width:115px;height:81px;background:#76777a"></div>
<div class="a" style="left:812px;top:239px;width:4px;height:81px;background:#666"></div>
<div class="a" style="left:698px;top:245px;width:9px;height:9px;background:#6e6e6e"></div><svg style="left:698px;top:245px" width="9" height="9"><path d="M4.5 1 V8 M1 4.5 H8" stroke="#aaa" stroke-width="1"/></svg>
<div class="tt f" style="left:707px;top:240px;width:39px;font-size:10px;color:#f0f0f0">ブラシサイズ</div>
<div class="a" style="left:722px;top:251px;width:38px;height:5px;background:#5a5a5a"></div>
<div class="a" style="left:722px;top:251px;width:24px;height:5px;background:linear-gradient(90deg,#8a8a8a,#bdbdbd)"></div>
<div class="tt f" style="left:776px;top:244px;width:14px;font-size:9px;color:#eee">60.0</div>
<svg style="left:794px;top:246px" width="4" height="8"><path d="M0 3 L2 0 L4 3 Z M0 5 L2 8 L4 5 Z" fill="#333"/></svg>
<div class="a" style="left:801px;top:240px;width:11px;height:16px;background:linear-gradient(#727275,#66666a)"></div>
<div class="a" style="left:802px;top:245px;width:7.5px;height:7.5px;border:1.4px solid #e0e0e0;border-radius:2px;background:#6a6a6a;box-shadow:inset 0 0 0 1.2px #6a6a6a, inset 0 0 0 3px #333"></div>
<div class="a" style="left:698px;top:258px;width:114px;height:1px;background:#7f8083"></div>
<div class="tt f" style="left:707px;top:262px;width:29px;font-size:10px;color:#f0f0f0">不透明度</div>
<div class="a" style="left:722px;top:270px;width:38px;height:5px;background:#5a5a5a"></div>
<div class="a" style="left:722px;top:270px;width:4px;height:5px;background:#aaa"></div>
<div class="tt f" style="left:782px;top:264px;width:8px;font-size:9px;color:#eee">15</div>
<svg style="left:794px;top:265px" width="4" height="8"><path d="M0 3 L2 0 L4 3 Z M0 5 L2 8 L4 5 Z" fill="#333"/></svg>
<div class="a" style="left:801px;top:259px;width:11px;height:17px;background:linear-gradient(#727275,#66666a)"></div>
<div class="a" style="left:802px;top:264px;width:7.5px;height:7.5px;border:1.4px solid #e0e0e0;border-radius:2px;background:#6a6a6a;box-shadow:inset 0 0 0 1.2px #6a6a6a, inset 0 0 0 3px #333"></div>
<div class="a" style="left:698px;top:277px;width:114px;height:1px;background:#7f8083"></div>
<div class="tt f" style="left:707px;top:282px;width:36px;font-size:9px;color:#f0f0f0">合成モード</div>
<div class="a" style="left:746px;top:279px;width:65px;height:16px;background:linear-gradient(#7a7a7a,#6a6a6a);border-radius:1px"></div>
<div class="tt f" style="left:765px;top:283px;width:15px;font-size:9px;color:#f0f0f0">通常</div>
<div class="a" style="left:802px;top:285px;width:0;height:0;border-left:4px solid transparent;border-right:4px solid transparent;border-top:4px solid #2a2a2a"></div>
<div class="a" style="left:698px;top:296px;width:114px;height:1px;background:#7f8083"></div>
<div class="tt f" style="left:707px;top:301px;width:22px;font-size:8px;color:#eee">アンチエイ</div>
<div class="a" style="left:733px;top:297px;width:17px;height:16px;background:#7994a6"></div>
<div class="a" style="left:734.5px;top:298px;width:14px;height:14px;border-radius:50%;background:#262626"></div>
<div class="a" style="left:752px;top:298px;width:14px;height:14px;border-radius:50%;background:#c8c8c8"></div>
<div class="a" style="left:755px;top:301px;width:8px;height:8px;border-radius:50%;background:#242424"></div>
<div class="a" style="left:769px;top:298px;width:14px;height:14px;border-radius:50%;background:#c8c8c8"></div>
<div class="a" style="left:771px;top:300px;width:10px;height:10px;border-radius:50%;background:radial-gradient(#222 30%,#777 70%)"></div>
<div class="a" style="left:786px;top:298px;width:14px;height:14px;border-radius:50%;background:#c8c8c8"></div>
<div class="a" style="left:788px;top:300px;width:10px;height:10px;border-radius:50%;background:radial-gradient(#222 10%,#888 80%)"></div>
<div class="a" style="left:801px;top:299px;width:11px;height:14px;background:#6b6b6b"></div>
<div class="a" style="left:802px;top:304px;width:0;height:0;border-left:4px solid transparent;border-right:4px solid transparent;border-top:4px solid #2a2a2a"></div>
<div class="a" style="left:698px;top:315px;width:114px;height:1px;background:#7f8083"></div>
<div class="tt f" style="left:707px;top:317px;width:30px;height:3px;overflow:hidden;font-size:9px;color:#ddd">手ブレ補正</div>
<!-- bottom bar -->
<div class="a" style="left:697px;top:320px;width:120px;height:19px;background:#747477;border-top:1px solid #626262"></div>
<svg style="left:780px;top:322px" width="15" height="15"><circle cx="7.5" cy="7.5" r="5.6" fill="none" stroke="#262626" stroke-width="1.8" stroke-dasharray="2.2 2.2" transform="rotate(10 7.5 7.5)"/></svg>
<svg style="left:799.5px;top:322.5px" width="14" height="15"><defs><linearGradient id="wg1" x1="0" x2="1"><stop offset="0" stop-color="#fafafa"/><stop offset="1" stop-color="#a8a8a8"/></linearGradient><linearGradient id="wd1" x1="0" x2="1"><stop offset="0" stop-color="#9a9a9a"/><stop offset="1" stop-color="#3a3a3a"/></linearGradient></defs><circle cx="4" cy="4" r="3.8" fill="url(#wg1)"/><path d="M2.4 6 H5.6 L5.2 14 H2.8 Z" fill="url(#wg1)"/><rect x="2.7" y="-0.5" width="2.6" height="3.6" fill="#747477"/><circle cx="9.8" cy="4" r="3.6" fill="url(#wd1)" stroke="#2e2e2e" stroke-width=".8"/><path d="M8.2 6.5 H11.4 L11 14 H8.6 Z" fill="url(#wd1)" stroke="#2e2e2e" stroke-width=".8"/><rect x="8.6" y="-0.5" width="2.4" height="3.6" fill="#747477"/></svg>
<!-- ================= color set ================= -->
<div class="hdr" style="left:697px;top:339px;width:120px;height:15px"></div>
<div class="mbox" style="left:697px;top:343px;width:14px;height:11px"></div>
<svg style="left:700.0px;top:345.0px" width="8" height="7"><path d="M0 1 L2.5 3.5 L0 6 Z" fill="#7a7a7a"/><path d="M3.5 1 H7.5 M3.5 3.5 H7.5 M3.5 6 H7.5" stroke="#7a7a7a" stroke-width="1"/></svg>
<div class="tab" style="left:711px;top:343px;width:49px;height:11px"></div>
<svg style="left:714px;top:343px" width="12" height="12"><rect x="0" y="0" width="4" height="4" fill="#2a7ae8"/><rect x="4" y="0" width="4" height="4" fill="#222a8a"/><rect x="8" y="0" width="4" height="4" fill="#e02a4a"/><rect x="0" y="4" width="4" height="4" fill="#e81818"/><rect x="4" y="4" width="4" height="4" fill="#3a6ad8" stroke="#e44" stroke-width=".8"/><rect x="8" y="4" width="4" height="4" fill="#f0e010"/><rect x="0" y="8" width="4" height="4" fill="#30a030"/><rect x="4" y="8" width="4" height="4" fill="#186018"/><rect x="8" y="8" width="4" height="4" fill="#111"/></svg>
<div class="tt f" style="left:728px;top:346px;width:30px;font-size:8px">カラーセット</div>
<div class="a" style="left:697px;top:354px;width:120px;height:102px;background:#76777a"></div>
<div class="a" style="left:697px;top:357px;width:79px;height:16px;background:linear-gradient(#7a7a7a,#686868);border-radius:1px"></div>
<div class="tt f" style="left:705px;top:360px;width:53px;font-size:10px;color:#eee">標準カラーセット</div>
<div class="a" style="left:764px;top:363px;width:0;height:0;border-left:4px solid transparent;border-right:4px solid transparent;border-top:4px solid #2a2a2a"></div>
<svg style="left:780.5px;top:358.5px" width="14" height="15"><defs><linearGradient id="wg2" x1="0" x2="1"><stop offset="0" stop-color="#fafafa"/><stop offset="1" stop-color="#a8a8a8"/></linearGradient><linearGradient id="wd2" x1="0" x2="1"><stop offset="0" stop-color="#9a9a9a"/><stop offset="1" stop-color="#3a3a3a"/></linearGradient></defs><circle cx="4" cy="4" r="3.8" fill="url(#wg2)"/><path d="M2.4 6 H5.6 L5.2 14 H2.8 Z" fill="url(#wg2)"/><rect x="2.7" y="-0.5" width="2.6" height="3.6" fill="#76777a"/><circle cx="9.8" cy="4" r="3.6" fill="url(#wd2)" stroke="#2e2e2e" stroke-width=".8"/><path d="M8.2 6.5 H11.4 L11 14 H8.6 Z" fill="url(#wd2)" stroke="#2e2e2e" stroke-width=".8"/><rect x="8.6" y="-0.5" width="2.4" height="3.6" fill="#76777a"/></svg>
<svg style="left:800px;top:360px" width="12" height="13"><rect x="1" y="6" width="5" height="6" fill="#ccc" stroke="#444" stroke-width=".6"/><rect x="6" y="6" width="5" height="6" fill="#aaa" stroke="#444" stroke-width=".6"/><rect x="3" y="2" width="5" height="3" fill="#ddd" stroke="#444" stroke-width=".6"/></svg>
<div class="a" style="left:697px;top:375px;width:115px;height:62px;background:#555"></div>
<div class="a" style="left:697px;top:375px;width:14px;height:14px;background:#000000"></div>
<div class="a" style="left:711px;top:375px;width:15px;height:14px;background:#ffffff"></div>
<svg style="left:726px;top:375px" width="14" height="14"><rect width="14" height="14" fill="#fff"/><g fill="#8a8a8a"><rect x="4.67" y="0" width="4.67" height="4.67"/><rect x="0" y="4.67" width="4.67" height="4.67"/><rect x="9.33" y="4.67" width="4.67" height="4.67"/><rect x="4.67" y="9.33" width="4.67" height="4.67"/></g></svg>
<div class="a" style="left:740px;top:375px;width:14px;height:14px;background:#111111"></div>
<div class="a" style="left:754px;top:375px;width:15px;height:14px;background:#1c1d1c"></div>
<div class="a" style="left:769px;top:375px;width:14px;height:14px;background:#222222"></div>
<div class="a" style="left:783px;top:375px;width:14px;height:14px;background:#2b2b2b"></div>
<div class="a" style="left:797px;top:375px;width:15px;height:14px;background:#454545"></div>
<div class="a" style="left:697px;top:389px;width:14px;height:14px;background:#6c6c6c"></div>
<div class="a" style="left:711px;top:389px;width:15px;height:14px;background:#858585"></div>
<div class="a" style="left:726px;top:389px;width:14px;height:14px;background:#9a9a9a"></div>
<div class="a" style="left:740px;top:389px;width:14px;height:14px;background:#b2b2b2"></div>
<div class="a" style="left:754px;top:389px;width:15px;height:14px;background:#cbcbcb"></div>
<div class="a" style="left:769px;top:389px;width:14px;height:14px;background:#dcdcdc"></div>
<div class="a" style="left:783px;top:389px;width:14px;height:14px;background:#ebebeb"></div>
<div class="a" style="left:797px;top:389px;width:15px;height:14px;background:#f4f4f4"></div>
<div class="a" style="left:697px;top:403px;width:14px;height:14px;background:#ff0000"></div>
<div class="a" style="left:711px;top:403px;width:15px;height:14px;background:#ffff00"></div>
<div class="a" style="left:726px;top:403px;width:14px;height:14px;background:#00ff00"></div>
<div class="a" style="left:740px;top:403px;width:14px;height:14px;background:#00ffff"></div>
<div class="a" style="left:754px;top:403px;width:15px;height:14px;background:#0000ff"></div>
<div class="a" style="left:769px;top:403px;width:14px;height:14px;background:#ff00ff"></div>
<div class="a" style="left:783px;top:403px;width:14px;height:14px;background:#2a2a2a"></div>
<div class="a" style="left:797px;top:403px;width:15px;height:14px;background:#454b55"></div>
<div class="a" style="left:697px;top:417px;width:14px;height:14px;background:#7590a8"></div>
<div class="a" style="left:711px;top:417px;width:15px;height:14px;background:#a8b2c4"></div>
<div class="a" style="left:726px;top:417px;width:14px;height:14px;background:#c8d2e4"></div>
<div class="a" style="left:740px;top:417px;width:14px;height:14px;background:#3a3128"></div>
<div class="a" style="left:754px;top:417px;width:15px;height:14px;background:#574838"></div>
<div class="a" style="left:769px;top:417px;width:14px;height:14px;background:#6a5440"></div>
<div class="a" style="left:783px;top:417px;width:14px;height:14px;background:#b4947c"></div>
<div class="a" style="left:797px;top:417px;width:15px;height:14px;background:#c4a48e"></div>
<div class="a" style="left:697px;top:431px;width:14px;height:6px;background:#f4a0a0"></div>
<div class="a" style="left:711px;top:431px;width:15px;height:6px;background:#f8c49c"></div>
<div class="a" style="left:726px;top:431px;width:14px;height:6px;background:#f8d898"></div>
<div class="a" style="left:740px;top:431px;width:14px;height:6px;background:#f8f09c"></div>
<div class="a" style="left:754px;top:431px;width:15px;height:6px;background:#c8f0a0"></div>
<div class="a" style="left:769px;top:431px;width:14px;height:6px;background:#a0f0a8"></div>
<div class="a" style="left:783px;top:431px;width:14px;height:6px;background:#a0f0e4"></div>
<div class="a" style="left:797px;top:431px;width:15px;height:6px;background:#9ce0f8"></div>
<div class="a" style="left:812px;top:375px;width:4px;height:62px;background:#666"></div>
<div class="a" style="left:697px;top:449px;width:5px;height:5px;background:#b01818;border:1px solid #333"></div>
<div class="a" style="left:719px;top:449px;width:5px;height:5px;background:#108a10;border:1px solid #333"></div>
<div class="a" style="left:741px;top:449px;width:5px;height:5px;background:#1828c8;border:1px solid #333"></div>
<svg style="left:762px;top:440px" width="14" height="14"><path d="M2 1 Q7 0 8 5" stroke="#999" stroke-width="1.2" fill="none"/><rect x="4" y="6" width="4" height="6" fill="#8a8a8a"/><rect x="8" y="6" width="4" height="6" fill="#9a9a9a"/></svg>
<svg style="left:781px;top:439px" width="14" height="15"><path d="M6 1 Q2 6 2 8.5 A4 4 0 0 0 10 8.5 Q10 6 6 1 Z" fill="#222"/><path d="M9 11 H14 M11.5 8.5 V13.5" stroke="#111" stroke-width="1.6"/></svg>
<svg style="left:800px;top:440px" width="12" height="14"><path d="M2 5 H10 L9 13 H3 Z" fill="#8a8a8a" stroke="#666" stroke-width=".6"/><rect x="1" y="3" width="10" height="2" fill="#999"/></svg>
<!-- ================= color circle ================= -->
<div class="hdr" style="left:697px;top:455px;width:120px;height:15px"></div>
<div class="mbox" style="left:697px;top:459px;width:14px;height:11px"></div>
<svg style="left:700.0px;top:461.0px" width="8" height="7"><path d="M0 1 L2.5 3.5 L0 6 Z" fill="#7a7a7a"/><path d="M3.5 1 H7.5 M3.5 3.5 H7.5 M3.5 6 H7.5" stroke="#7a7a7a" stroke-width="1"/></svg>
<div class="tab" style="left:711px;top:459px;width:54px;height:11px"></div>
<div class="a" style="left:714px;top:460px;width:11px;height:11px;border-radius:50%;background:conic-gradient(#f00,#ff0,#0f0,#0ff,#00f,#f0f,#f00)"></div>
<div class="a" style="left:717.5px;top:463.5px;width:4px;height:4px;border-radius:50%;background:#777"></div>
<div class="tt f" style="left:728px;top:462px;width:36px;font-size:8px">カラーサークル</div>
<div class="a" style="left:697px;top:470px;width:120px;height:142px;background:#77787b"></div>
<div class="a" style="left:697px;top:478px;width:119px;height:119px;border-radius:50%;box-shadow:0 0 0 1px #5a5a5a;background:conic-gradient(from 0deg,#ff0 0deg,#0f0 60deg,#0ff 120deg,#00f 180deg,#f0f 240deg,#f00 300deg,#ff0 360deg)"></div>
<div class="a" style="left:707px;top:488px;width:99px;height:99px;border-radius:50%;background:#77787b;box-shadow:0 0 0 1px #5a5a5a"></div>
<div class="a" style="left:725px;top:505px;width:64px;height:64px;box-shadow:0 0 0 1px #5a5a5a;background:linear-gradient(to bottom,rgba(0,0,0,0),#000),linear-gradient(to right,#fff,#f08c00)"></div>
<svg style="left:757px;top:528px" width="10" height="10"><circle cx="5" cy="5" r="3.2" fill="none" stroke="#ddd" stroke-width="1.2"/><circle cx="5" cy="5" r="4.2" fill="none" stroke="#555" stroke-width=".6"/></svg>
<div class="a" style="left:729px;top:483.5px;width:6.5px;height:10.5px;background:#f0900c;border:1.3px solid #f4f4f4;box-shadow:0 0 0 .8px #555;transform:rotate(-26deg)"></div>
<svg style="left:799px;top:595px" width="14" height="14"><circle cx="7" cy="7" r="6" fill="none" stroke="url(#cw)" stroke-width="2.5"/><defs><linearGradient id="cw"><stop offset="0" stop-color="#f0f"/><stop offset=".5" stop-color="#0f0"/><stop offset="1" stop-color="#f80"/></linearGradient></defs><circle cx="7" cy="7" r="4" fill="#333"/><path d="M5 5 L10 8 L5 10 Z" fill="#e33"/></svg>
<div class="a" style="left:725px;top:604px;width:7px;height:7px;background:#1e2c3a;border:1px solid #8aa"></div>
<div class="tt f" style="left:737px;top:602px;width:11px;font-size:9px;color:#ddd">34</div>
<div class="a" style="left:748px;top:604px;width:7px;height:7px;background:#1e2c3a;border:1px solid #8aa"></div>
<div class="tt f" style="left:759px;top:602px;width:12px;font-size:9px;color:#ddd">59</div>
<div class="a" style="left:770px;top:604px;width:7px;height:7px;background:#1a1a2a;border:1px solid #667"></div>
<div class="tt f" style="left:781px;top:602px;width:11px;font-size:9px;color:#ddd">57</div>
<!-- swatches -->
<div class="a" style="left:664px;top:561px;width:33px;height:51px;background:#77787b"></div>
<div class="a" style="left:664px;top:560px;width:33px;height:1px;background:#626262"></div>
<div class="a" style="left:675px;top:572px;width:20px;height:20px;background:#fff"></div>
<div class="a" style="left:664px;top:561px;width:21px;height:21px;background:#9b6a3c;border:1px solid #7fa4c4"></div>
<div class="a" style="left:664px;top:593px;width:31px;height:10px;background:#fff;background-image:linear-gradient(45deg,#aaa 25%,transparent 25%,transparent 75%,#aaa 75%),linear-gradient(45deg,#aaa 25%,transparent 25%,transparent 75%,#aaa 75%);background-size:4px 4px;background-position:0 0,2px 2px"></div>
<div class="a" style="left:704px;top:589px;width:14px;height:14px;background:#fff"></div>
<div class="a" style="left:696px;top:581px;width:15px;height:14px;background:#9b6a3c;border:1px solid #7fa4c4"></div>
<div class="a" style="left:696px;top:603px;width:22px;height:7px;background:#fff;background-image:linear-gradient(45deg,#aaa 25%,transparent 25%,transparent 75%,#aaa 75%),linear-gradient(45deg,#aaa 25%,transparent 25%,transparent 75%,#aaa 75%);background-size:4px 4px;background-position:0 0,2px 2px"></div>
<!-- ================= layer property ================= -->
<div class="hdr" style="left:818px;top:47px;width:142px;height:16px"></div>
<div class="mbox" style="left:819px;top:52px;width:12px;height:11px"></div>
<svg style="left:822.0px;top:54.0px" width="8" height="7"><path d="M0 1 L2.5 3.5 L0 6 Z" fill="#7a7a7a"/><path d="M3.5 1 H7.5 M3.5 3.5 H7.5 M3.5 6 H7.5" stroke="#7a7a7a" stroke-width="1"/></svg>
<div class="tab" style="left:832px;top:52px;width:63px;height:11px"></div>
<svg style="left:835px;top:52px" width="16" height="11"><path d="M2 5 L5 8 L13 1" stroke="#d81818" stroke-width="1.8" fill="none"/><rect x="1" y="8" width="12" height="2" fill="#111"/><rect x="1" y="10" width="12" height="1" fill="#ddd"/></svg>
<div class="tt f" style="left:851px;top:55px;width:42px;font-size:8px">レイヤープロパティ</div>
<div class="a" style="left:818px;top:63px;width:142px;height:84px;background:#767676"></div>
<div class="a" style="left:953px;top:63px;width:1px;height:84px;background:#6e6f72"></div><div class="a" style="left:958px;top:63px;width:2px;height:84px;background:#68686b"></div>
<div class="tt f" style="left:823px;top:68px;width:16px;font-size:9px;color:#eee">効果</div>
<div class="a" style="left:883px;top:78px;width:70px;height:15px;background:#6b6b6b;border-radius:1px"></div>
<div class="a" style="left:885px;top:80px;width:11px;height:11px;border-radius:50%;background:#222;border:2px solid #f4f4f4"></div>
<div class="a" style="left:900px;top:80px;width:11px;height:11px;border-radius:50%;background:#2f7fd8;box-shadow:inset 2px -2px 0 #1a5aa8"></div>
<div class="a" style="left:915px;top:80px;width:11px;height:11px;background:#444;background-image:linear-gradient(45deg,#999 25%,transparent 25%,transparent 75%,#999 75%),linear-gradient(45deg,#999 25%,transparent 25%,transparent 75%,#999 75%);background-size:3px 3px;background-position:0 0,1.5px 1.5px"></div>
<div class="a" style="left:933px;top:82px;width:8px;height:8px;background:#eee"></div>
<div class="a" style="left:931px;top:80px;width:8px;height:8px;background:#46b4f4"></div>
<div class="a" style="left:943px;top:83px;width:0;height:0;border-left:4px solid transparent;border-right:4px solid transparent;border-top:4px solid #2a2a2a"></div>
<div class="a" style="left:819px;top:100px;width:134px;height:1px;background:#6e6e6e"></div>
<div class="tt f" style="left:823px;top:98px;width:25px;font-size:9px;color:#eee">表現色</div>
<div class="a" style="left:828px;top:109px;width:90px;height:15px;background:linear-gradient(#7c7c7c,#6c6c6c);border-radius:1px"></div>
<div class="a" style="left:851px;top:110px;width:4px;height:12px;background:#f46e6e"></div>
<div class="a" style="left:855px;top:110px;width:4px;height:12px;background:#6eb4f8"></div>
<div class="a" style="left:859px;top:110px;width:4px;height:12px;background:#7ef07a"></div>
<div class="tt f" style="left:866px;top:113px;width:18px;font-size:9px;color:#eee">カラー</div>
<div class="a" style="left:909px;top:115px;width:0;height:0;border-left:4px solid transparent;border-right:4px solid transparent;border-top:4px solid #2a2a2a"></div>
<!-- ================= layer panel ================= -->
<div class="a" style="left:818px;top:147px;width:142px;height:3px;background:#5a5a5a"></div>
<div class="hdr" style="left:818px;top:150px;width:142px;height:13px"></div>
<div class="mbox" style="left:819px;top:152px;width:12px;height:11px"></div>
<svg style="left:822.0px;top:154.0px" width="8" height="7"><path d="M0 1 L2.5 3.5 L0 6 Z" fill="#7a7a7a"/><path d="M3.5 1 H7.5 M3.5 3.5 H7.5 M3.5 6 H7.5" stroke="#7a7a7a" stroke-width="1"/></svg>
<div class="tab" style="left:832px;top:152px;width:39px;height:11px"></div>
<svg style="left:834px;top:152px" width="12" height="11"><path d="M1 3 Q6 0 11 3 Q6 6 1 3 Z M1 6 Q6 3 11 6 Q6 9 1 6 Z M1 9 Q6 6 11 9 Q6 12 1 9 Z" fill="#ddd" stroke="#444" stroke-width=".5"/></svg>
<div class="tt f" style="left:851px;top:154px;width:19px;font-size:8px">レイヤー</div>
<div class="tab" style="left:872px;top:152px;width:60px;height:11px;background:#5f5f5f"></div>
<svg style="left:874px;top:152px" width="11" height="11"><circle cx="5.5" cy="5.5" r="4.5" fill="#666" stroke="#444" stroke-width="1"/><circle cx="5.5" cy="5.5" r="2" fill="#555"/></svg>
<div class="tt f" style="left:886px;top:154px;width:44px;font-size:8px;color:#8a8a8a">クイックアクセス</div>
<div class="a" style="left:818px;top:163px;width:142px;height:449px;background:#76777a"></div>
<div class="a" style="left:958px;top:163px;width:2px;height:56px;background:#6e6e71"></div><div class="a" style="left:954px;top:219px;width:6px;height:393px;background:#6b6b6c;border-right:1px solid #5e5e5e"></div>
<div class="a" style="left:818px;top:166px;width:70px;height:16px;background:linear-gradient(#7c7c7c,#6a6a6a);border-radius:1px"></div>
<div class="tt f" style="left:840px;top:170px;width:15px;font-size:9px;color:#eee">通常</div>
<div class="a" style="left:878px;top:172px;width:0;height:0;border-left:4px solid transparent;border-right:4px solid transparent;border-top:4px solid #2a2a2a"></div>
<div class="a" style="left:892px;top:169px;width:39px;height:7px;background:#ddd;background-image:linear-gradient(45deg,#bbb 25%,transparent 25%,transparent 75%,#bbb 75%),linear-gradient(45deg,#bbb 25%,transparent 25%,transparent 75%,#bbb 75%);background-size:2px 2px;background-position:0 0,1px 1px"></div>
<div class="a" style="left:931px;top:166px;width:2px;height:14px;background:#5a5a5a"></div>
<div class="tt f" style="left:937px;top:170px;width:12px;font-size:9px;color:#eee">100</div>
<div class="a" style="left:953px;top:170px;width:1px;height:2px;background:#222"></div>
<div class="a" style="left:953px;top:174px;width:1px;height:2px;background:#222"></div>
<div class="a" style="left:818px;top:183px;width:136px;height:1px;background:#6e6e6e"></div>
<!-- row 2 icons -->
<svg style="left:836px;top:186px" width="15" height="13"><path d="M1 4 V8.5 A6.5 3 0 0 0 14 8.5 V4" fill="#6a6a6a" stroke="#333" stroke-width=".7"/><ellipse cx="7.5" cy="4" rx="6.5" ry="3" fill="#ddd" stroke="#333" stroke-width=".7"/><ellipse cx="7.5" cy="4.6" rx="5.2" ry="2" fill="#333"/></svg>
<svg style="left:857px;top:185px" width="12" height="15"><path d="M5 1 H7 L8 14 H4 Z" fill="#eee" stroke="#444" stroke-width=".6"/><path d="M1 3 L5 4 M11 3 L7 4" stroke="#ccc" stroke-width="1.5"/><rect x="4" y="4" width="4" height="2" fill="#333"/></svg>
<svg style="left:876px;top:185px" width="13" height="15"><path d="M3 7 V4 A3.5 3.5 0 0 1 10 4 V7" fill="none" stroke="#333" stroke-width="1.5"/><rect x="1.5" y="7" width="10" height="7" rx="1" fill="#555" stroke="#333" stroke-width=".6"/></svg>
<svg style="left:894px;top:185px" width="15" height="15"><path d="M3 5 V3 A2 2 0 0 1 7 3 V5" fill="none" stroke="#333" stroke-width="1"/><rect x="2" y="5" width="6" height="5" fill="#eee" stroke="#333" stroke-width=".6"/><rect x="7" y="10" width="4" height="4" fill="#eee" stroke="#555" stroke-width=".5"/><rect x="10" y="7" width="4" height="4" fill="#eee" stroke="#555" stroke-width=".5"/></svg>
<div class="a" style="left:913px;top:184px;width:21px;height:16px;background:#7e7e7e"></div>
<svg style="left:915px;top:186px" width="18" height="13"><path d="M1 2 H9 V9 H1 Z" fill="#8a8a8a" stroke="#666" stroke-width=".6"/><path d="M9 5 H17 L13 9 Z" fill="#6a6a6a"/><path d="M9 9 L13 13 M13 9 L9 13" stroke="#666" stroke-width="1"/></svg>
<div class="a" style="left:935px;top:184px;width:21px;height:16px;background:#7e7e7e"></div>
<svg style="left:937px;top:186px" width="18" height="13"><path d="M1 1 H9 L1 9 Z" fill="none" stroke="#666" stroke-width="1"/><path d="M9 5 H17 L13 9 Z" fill="#6a6a6a"/><path d="M9 9 L13 13 M13 9 L9 13" stroke="#666" stroke-width="1"/></svg>
<div class="a" style="left:818px;top:201px;width:136px;height:1px;background:#6e6e6e"></div>
<!-- row 3 icons -->
<svg style="left:825px;top:203px" width="12" height="15"><path d="M1 1 H10 V11 L7 14 H1 Z" fill="#f4f4f4" stroke="#555" stroke-width=".5"/><path d="M10 11 H7 V14" fill="#555"/></svg>
<svg style="left:845px;top:203px" width="13" height="15"><path d="M1 1 H9 V13 H1 Z" fill="#f4f4f4" stroke="#555" stroke-width=".5"/><circle cx="10" cy="11" r="2.5" fill="#ddd" stroke="#555" stroke-width=".6"/></svg>
<svg style="left:864px;top:203px" width="14" height="15"><path d="M1 1 H6 L7 2 H10 V11 H1 Z" fill="#aaa" stroke="#555" stroke-width=".5"/><rect x="6" y="5" width="7" height="9" fill="#f4f4f4" stroke="#555" stroke-width=".5"/></svg>
<svg style="left:884px;top:204px" width="12" height="13"><path d="M6 1 L10 5 H8 V8 H4 V5 H2 Z M6 12 L10 8 H2 Z" fill="#888" stroke="#666" stroke-width=".5"/></svg>
<svg style="left:902px;top:203px" width="15" height="14"><path d="M7.5 1 L14 5 V10 L7.5 13 L1 10 V5 Z" fill="#eee" stroke="#333" stroke-width=".6"/><path d="M5 5 H10 V10 L7.5 12 L5 10 Z" fill="#222"/></svg>
<svg style="left:921px;top:204px" width="15" height="12"><rect x="1" y="1" width="13" height="10" fill="#444" stroke="#333" stroke-width=".6"/><circle cx="7.5" cy="6" r="3" fill="#f4f4f4"/></svg>
<svg style="left:942px;top:203px" width="12" height="15"><path d="M2 6 H10 L9 14 H3 Z" fill="#f4f4f4" stroke="#555" stroke-width=".6"/><rect x="1" y="4" width="10" height="2" fill="#eee" stroke="#555" stroke-width=".5"/><path d="M4 4 Q6 0 8 4" fill="#eee" stroke="#555" stroke-width=".5"/></svg>
<div class="a" style="left:818px;top:218px;width:136px;height:1px;background:#6a6a6a"></div>
<!-- layer rows -->
<div class="a" style="left:834px;top:219px;width:1px;height:37px;background:#6a6a6a"></div>
<div class="a" style="left:849px;top:219px;width:1px;height:37px;background:#6a6a6a"></div>
<div class="a" style="left:850px;top:220px;width:104px;height:18px;background:#7793a4"></div>
<div class="a" style="left:818px;top:238px;width:136px;height:1px;background:#6a6a6a"></div>
<div class="a" style="left:818px;top:256px;width:136px;height:1px;background:#6a6a6a"></div>
<svg style="left:821px;top:225px" width="11" height="8"><path d="M1 4 Q5.5 -1 10 4 Q5.5 9 1 4 Z" fill="#eee" stroke="#222" stroke-width=".8"/><circle cx="5.5" cy="4" r="2" fill="#111"/></svg>
<svg style="left:837px;top:223px" width="11" height="11"><path d="M10 1 L9 3 L3 9 L1 10 L2 8 L8 2 Z" fill="#222"/><path d="M9 1 L10 2" stroke="#ddd" stroke-width="1"/></svg>
<div class="a" style="left:852px;top:224px;width:13px;height:11px;border:1.5px solid #333;background:#ddd;background-image:linear-gradient(45deg,#bbb 25%,transparent 25%,transparent 75%,#bbb 75%),linear-gradient(45deg,#bbb 25%,transparent 25%,transparent 75%,#bbb 75%);background-size:3px 3px;background-position:0 0,1.5px 1.5px"></div>
<div class="tt f" style="left:866px;top:221px;width:37px;font-size:9px;color:#eee">100 %通常</div>
<div class="tt f" style="left:866px;top:229px;width:27px;font-size:9px;color:#eee">レイヤー 1</div>
<svg style="left:821px;top:243px" width="11" height="8"><path d="M1 4 Q5.5 -1 10 4 Q5.5 9 1 4 Z" fill="#eee" stroke="#222" stroke-width=".8"/><circle cx="5.5" cy="4" r="2" fill="#111"/></svg>
<div class="a" style="left:852px;top:242px;width:12px;height:10px;background:#fff;border:1px solid #555"></div>
<svg style="left:865px;top:239px" width="14" height="14"><path d="M1 1 H9 L13 5 V13 H1 Z" fill="#f4f4f4" stroke="#555" stroke-width=".6"/><path d="M9 1 V5 H13" fill="#ccc" stroke="#555" stroke-width=".5"/></svg>
<div class="tt f" style="left:880px;top:248px;width:17px;font-size:9px;color:#eee">用紙</div>
<!-- ================= taskbar ================= -->
<div class="a" style="left:0;top:612px;width:960px;height:28px;background:#0e0e0e"></div>
<div class="a" style="left:0;top:612px;width:34px;height:28px;background:#2a0a1c"></div>
<svg style="left:11px;top:620px" width="12" height="12"><path d="M0 1.6 L5 0.9 V5.6 H0 Z M5.8 0.8 L12 0 V5.6 H5.8 Z M0 6.4 H5 V11.1 L0 10.4 Z M5.8 6.4 H12 V12 L5.8 11.2 Z" fill="#fff"/></svg>
<div class="a" style="left:34px;top:612px;width:242px;height:28px;background:#f0f0f0"></div>
<div class="a" style="left:41px;top:620px;width:13px;height:13px;border-radius:50%;border:2px solid #111"></div>
<div class="t f" style="left:61px;top:621px;width:77px;font-size:10px;color:#333">ここに入力して検索</div>
<svg style="left:256px;top:619px" width="9" height="14"><rect x="2" y="0.5" width="5" height="8" rx="2.5" fill="none" stroke="#333" stroke-width="1"/><path d="M1 6 A3.5 3.5 0 0 0 8 6 M4.5 10 V13 M2 13 H7" stroke="#333" stroke-width="1" fill="none"/></svg>
<svg style="left:285px;top:620px" width="14" height="13"><rect x="2" y="2" width="7" height="9" fill="none" stroke="#ddd" stroke-width="1.2"/><path d="M0 1 H11 M0 12 H11 M12 0 V13" stroke="#ddd" stroke-width="1.2"/></svg>
<svg style="left:320px;top:619px" width="16" height="14"><path d="M0 2 H6 L7 3 H16 V13 H0 Z" fill="#e8b040"/><path d="M0 5 H16 V13 H0 Z" fill="#f4c860"/><rect x="4" y="8" width="8" height="5" fill="#3c8ed8"/></svg>
<svg style="left:353px;top:618px" width="17" height="16"><path d="M5 4 Q5 0 8.5 0 Q12 0 12 4" stroke="#eee" stroke-width="1.3" fill="none"/><rect x="0" y="4" width="17" height="12" fill="#fafafa"/><rect x="5" y="6" width="3" height="3" fill="#f25022"/><rect x="9" y="6" width="3" height="3" fill="#7fba00"/><rect x="5" y="10" width="3" height="3" fill="#00a4ef"/><rect x="9" y="10" width="3" height="3" fill="#ffb900"/></svg>
<svg style="left:388px;top:618px" width="17" height="17"><circle cx="8.5" cy="8.5" r="8.5" fill="#db4437"/><path d="M8.5 8.5 L1.2 4.2 A8.5 8.5 0 0 0 4.3 15.9 Z" fill="#0f9d58"/><path d="M8.5 8.5 L4.3 15.9 A8.5 8.5 0 0 0 16.6 6 Z" fill="#f4b400"/><circle cx="8.5" cy="8.5" r="4" fill="#fff"/><circle cx="8.5" cy="8.5" r="3.1" fill="#4285f4"/></svg>
<div class="t" style="left:424px;top:615px;font-size:19px;font-weight:bold;color:#2a8ee6">e</div>
<svg style="left:422px;top:617px" width="18" height="18"><path d="M2 16 Q0 12 6 6 Q13 0 16.5 1.5 Q17.5 4 13 8" stroke="#f0c028" stroke-width="1.5" fill="none"/></svg>
<div class="a" style="left:457px;top:618px;width:16px;height:16px;border-radius:3px;background:#c8c8c8"></div>
<svg style="left:459px;top:620px" width="13" height="11"><path d="M7.54 5.62 L7.52 5.75 L7.48 5.89 L7.41 6.02 L7.31 6.16 L7.19 6.30 L7.03 6.43 L6.85 6.55 L6.65 6.66 L6.42 6.75 L6.18 6.81 L5.93 6.86 L5.68 6.87 L5.43 6.86 L5.18 6.82 L4.94 6.74 L4.73 6.64 L4.53 6.50 L4.37 6.34 L4.25 6.15 L4.16 5.93 L4.12 5.70 L4.12 5.45 L4.17 5.18 L4.28 4.91 L4.43 4.64 L4.64 4.37 L4.89 4.12 L5.18 3.88 L5.52 3.66 L5.89 3.47 L6.29 3.31 L6.70 3.19 L7.13 3.11 L7.57 3.08 L8.00 3.09 L8.42 3.15 L8.81 3.26 L9.18 3.42 L9.50 3.63 L9.78 3.88 L10.00 4.17 L10.16 4.50 L10.25 4.86 L10.27 5.24 L10.22 5.64 L10.09 6.05 L9.89 6.47 L9.62 6.87 L9.27 7.26 L8.87 7.63 L8.40 7.97 L7.88 8.27 L7.32 8.53 L6.73 8.73 L6.12 8.88 L5.49 8.96 L4.87 8.98 L4.27 8.93 L3.69 8.82 L3.15 8.63 L2.67 8.38 L2.24 8.07 L1.89 7.70 L1.62 7.28 L1.43 6.81 L1.34 6.31 L1.35 5.78 L1.45 5.23 L1.66 4.67 L1.97 4.12 L2.37 3.58 L2.86 3.06 L3.43 2.58 L4.07 2.15 L4.77 1.77 L5.53 1.46 L6.31 1.21 L7.12 1.05 L7.93 0.97 L8.73 0.97" stroke="#555" stroke-width="1.3" fill="none" stroke-linecap="round"/></svg>
<div class="a" style="left:483px;top:612px;width:34px;height:28px;background:#2e2e2e"></div>
<div class="a" style="left:483px;top:638px;width:34px;height:2px;background:#76b9ed"></div>
<div class="a" style="left:492px;top:618px;width:16px;height:16px;border-radius:2px;background:#f4f4f4"></div>
<svg style="left:494px;top:620px" width="12" height="12"><path d="M2.5 4.5 Q3 1 6.5 1 Q10 1 10 4.5 Q10 7.5 7 7.5 Q5 7.5 5 6 Q5 4.5 6.5 4.5 Q8 4.5 7.5 6.5 L5.5 11" stroke="#111" stroke-width="1.6" fill="none" stroke-linecap="round"/></svg>
<svg style="left:525px;top:617px" width="18" height="18"><rect x="1" y="1" width="16" height="16" rx="4" fill="#2f8a3a"/><path d="M1 12 Q8 4 17 8 V17 H1 Z" fill="#c8a040"/><path d="M3 6 Q9 2 15 5" stroke="#9ae060" stroke-width="2" fill="none"/><circle cx="6" cy="12" r="2" fill="#e85a2a"/></svg>
<svg style="left:715px;top:620px" width="12" height="12"><circle cx="4" cy="5" r="2.2" fill="none" stroke="#ddd" stroke-width="1"/><path d="M0.5 12 Q1 8 4 8 Q7 8 7.5 12" stroke="#ddd" stroke-width="1" fill="none"/><circle cx="8.5" cy="3" r="2" fill="none" stroke="#ddd" stroke-width="1"/><path d="M7 6.5 Q8.5 5.5 10 6 Q11.5 7 11.5 10" stroke="#ddd" stroke-width="1" fill="none"/></svg>
<svg style="left:743px;top:623px" width="11" height="7"><path d="M1 6 L5.5 1 L10 6" stroke="#ddd" stroke-width="1.1" fill="none"/></svg>
<svg style="left:765px;top:621px" width="13" height="9"><path d="M2.5 8.5 A2.5 2.5 0 0 1 2.5 3.8 A4 4 0 0 1 9.5 3 A2.8 2.8 0 0 1 10.5 8.5 Z" fill="#eee"/></svg>
<svg style="left:789px;top:620px" width="11" height="12"><path d="M1 11 A10 10 0 0 1 10 2 M3 11 A8 8 0 0 1 10 4.5 M5 11 A6 6 0 0 1 10 7" stroke="#bbb" stroke-width="1" fill="none"/><circle cx="9" cy="10" r="1.2" fill="#ddd"/></svg>
<svg style="left:809px;top:620px" width="13" height="12"><path d="M1 4 H3.5 L7 1 V11 L3.5 8 H1 Z" fill="none" stroke="#ddd" stroke-width="1"/><path d="M8.5 4 Q10 6 8.5 8 M10 2.5 Q12.5 6 10 9.5" stroke="#ddd" stroke-width="1" fill="none"/></svg>
<svg style="left:834px;top:619px" width="14" height="14"><path d="M2 12 L9 3 Q11 1 12.5 2.5 Q13.5 4 11 6 L5 13" stroke="#ddd" stroke-width="1.2" fill="none"/><path d="M2 12 L1 13.5 M4 8 Q2 8 3 10" stroke="#ddd" stroke-width="1" fill="none"/></svg>
<div class="t" style="left:858px;top:621px;font-size:14px;color:#e8e8e8;transform:scaleX(.85);transform-origin:0 0">A</div>
<div class="t f" style="left:887px;top:616px;width:20px;font-size:9px;color:#eee">13:44</div>
<div class="t f" style="left:875.5px;top:628px;width:43px;font-size:9px;color:#eee">2019/04/14</div>
<svg style="left:930px;top:620px" width="14" height="13"><path d="M1 1 H13 V9 H7 L4 12 V9 H1 Z" fill="none" stroke="#ddd" stroke-width="1.1"/></svg>
<div class="a" style="left:954px;top:612px;width:1px;height:28px;background:#444"></div>
<!-- ================= red annotations ================= -->
<svg style="left:0;top:0" width="960" height="640"><g fill="none" stroke="#f25c4c" stroke-width="2" stroke-linecap="round">
<path d="M829.5 175 C833 165,836 150,835.6 130 C835 105,830 85,823 74 C820 70,817 68,814 69.5 C809 72,801 84,796 97 C790 114,787.5 135,787.5 150 C788 168,793 180,802 184.5 C810 188,818 187,822.5 185"/>
<path d="M830 292 C831.5 280,832 268,829 256 C826 246,820 237,813 233 C808 233,803 238,798 248 C793 260,792 275,793 290 C795 303,800 313,808 317 C814 318,820 312,826 305"/>
</g></svg>
<script>
document.querySelectorAll('.f').forEach(function(e){var w=parseFloat(e.style.width);e.style.width='auto';var r=e.getBoundingClientRect().width;if(r>0){e.style.transformOrigin='0 0';e.style.transform='scaleX('+(w/r)+')';}});
</script>
</body></html>
